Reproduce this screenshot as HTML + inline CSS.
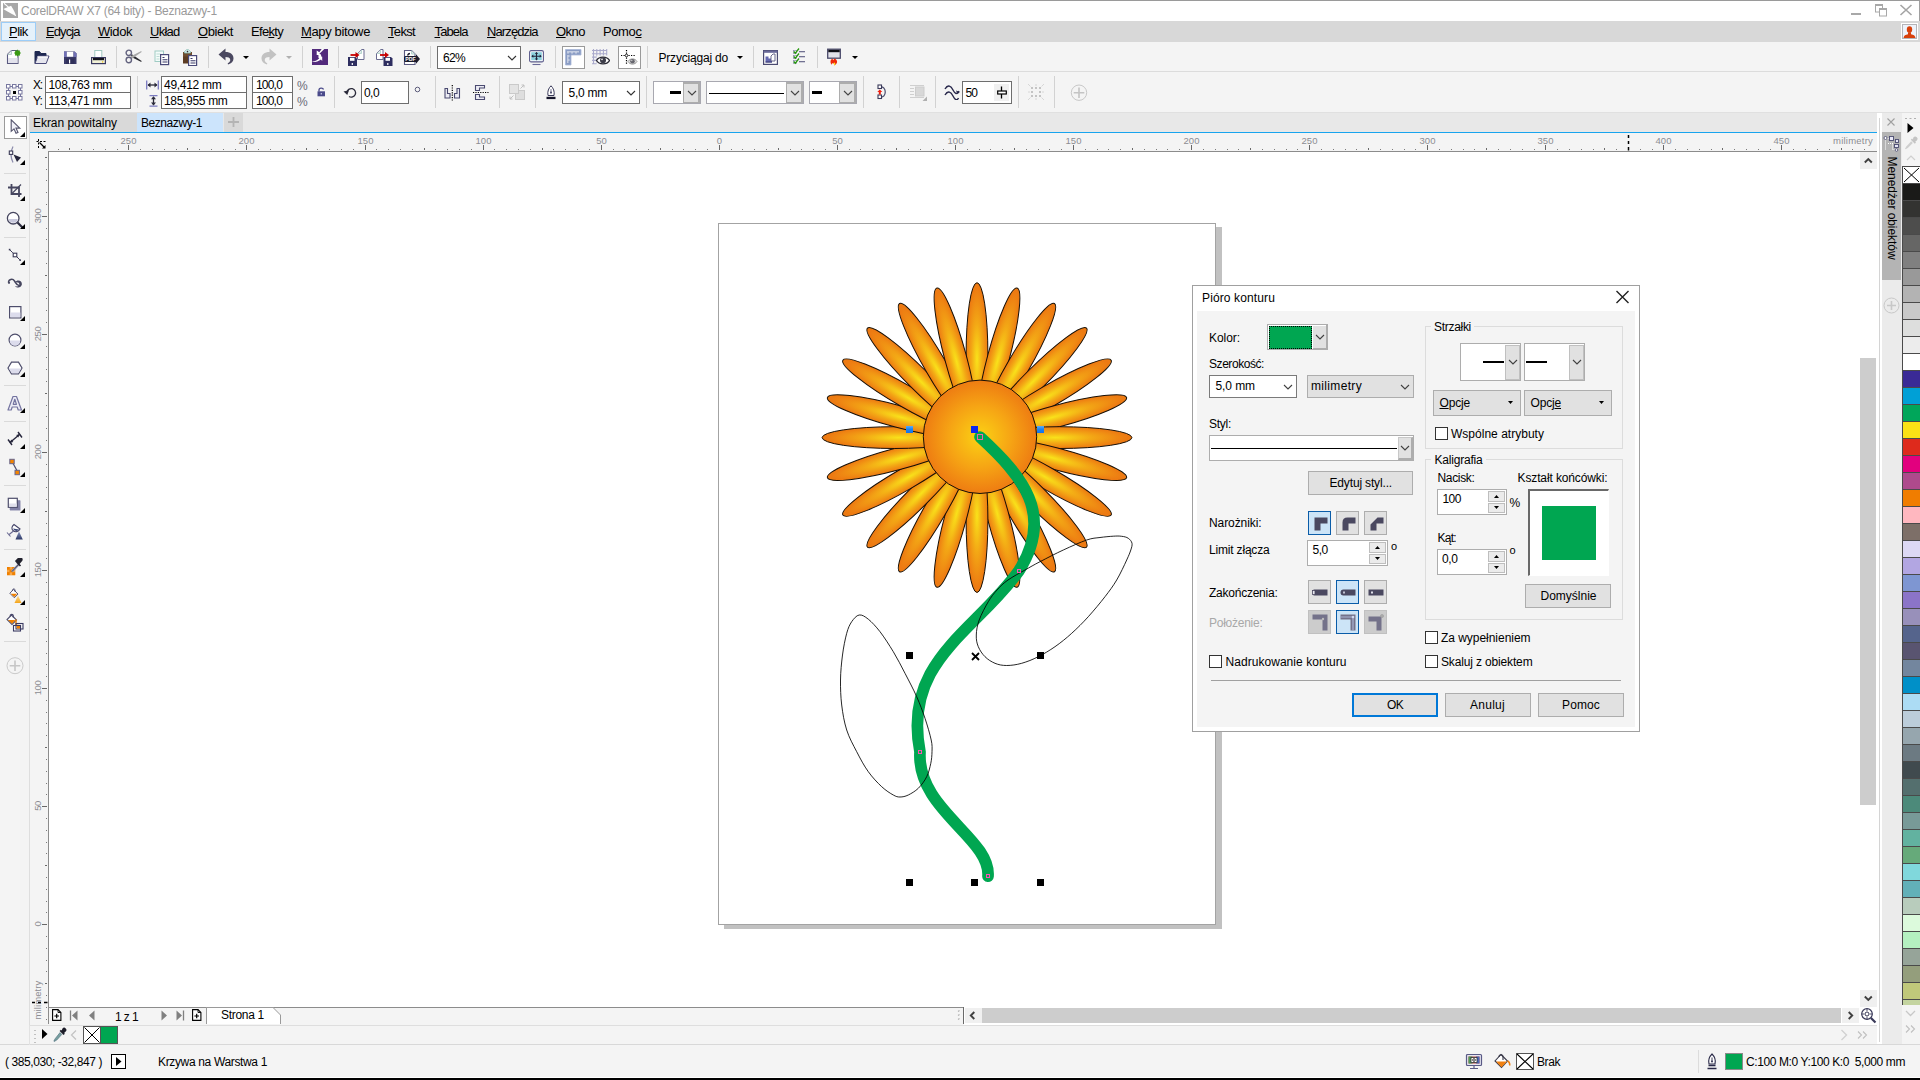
<!DOCTYPE html>
<html><head><meta charset="utf-8"><title>CorelDRAW X7</title><style>
html,body{margin:0;padding:0;}
body{width:1920px;height:1080px;overflow:hidden;position:relative;background:#fff;font-family:"Liberation Sans",sans-serif;}
.a{position:absolute;display:block;}
.t{position:absolute;white-space:pre;font-family:"Liberation Sans",sans-serif;}
u{text-decoration:underline;text-underline-offset:1px;}
</style></head><body>
<!-- sec_base -->
<div class="a" style="left:0px;top:0px;width:1920px;height:21px;background:#fff;"></div>
<div class="a" style="left:0px;top:0px;width:1920px;height:1px;background:#9a9a9a;"></div>
<div class="a" style="left:0px;top:21px;width:1920px;height:21px;background:#d8d8d8;"></div>
<div class="a" style="left:0px;top:42px;width:1920px;height:71px;background:#f4f4f4;"></div>
<div class="a" style="left:0px;top:71px;width:1920px;height:1px;background:#dcdcdc;"></div>
<div class="a" style="left:0px;top:112px;width:1920px;height:1px;background:#e0e0e0;"></div>
<div class="a" style="left:0px;top:113px;width:30px;height:934px;background:#f4f4f4;"></div>
<div class="a" style="left:29px;top:113px;width:1px;height:912px;background:#dedede;"></div>
<div class="a" style="left:30px;top:113px;width:1847px;height:19px;background:#e8e8e8;"></div>
<div class="a" style="left:30px;top:132px;width:1847px;height:1px;background:#18a4ee;"></div>
<div class="a" style="left:30px;top:133px;width:1847px;height:19px;background:#f4f4f4;"></div>
<div class="a" style="left:30px;top:133px;width:19px;height:892px;background:#f4f4f4;"></div>
<div class="a" style="left:49px;top:152px;width:1809px;height:854px;background:#fff;"></div>
<div class="a" style="left:48px;top:151px;width:1829px;height:1px;background:#8c8c8c;"></div>
<div class="a" style="left:48px;top:151px;width:1px;height:855px;background:#8c8c8c;"></div>
<!-- sec_canvas -->
<svg class="a" style="left:30px;top:133px;" width="1847" height="18" viewBox="0 0 1847 18"><rect x="28" y="16" width="1" height="1" fill="#7a7a7a"/><rect x="39" y="15" width="1" height="2" fill="#6a6a6a"/><rect x="51" y="16" width="1" height="1" fill="#7a7a7a"/><rect x="63" y="16" width="1" height="1" fill="#7a7a7a"/><rect x="75" y="16" width="1" height="1" fill="#7a7a7a"/><rect x="87" y="16" width="1" height="1" fill="#7a7a7a"/><rect x="98" y="12" width="1" height="5" fill="#686868"/><rect x="110" y="16" width="1" height="1" fill="#7a7a7a"/><rect x="122" y="16" width="1" height="1" fill="#7a7a7a"/><rect x="134" y="16" width="1" height="1" fill="#7a7a7a"/><rect x="146" y="16" width="1" height="1" fill="#7a7a7a"/><rect x="157" y="15" width="1" height="2" fill="#6a6a6a"/><rect x="169" y="16" width="1" height="1" fill="#7a7a7a"/><rect x="181" y="16" width="1" height="1" fill="#7a7a7a"/><rect x="193" y="16" width="1" height="1" fill="#7a7a7a"/><rect x="205" y="16" width="1" height="1" fill="#7a7a7a"/><rect x="216" y="12" width="1" height="5" fill="#686868"/><rect x="228" y="16" width="1" height="1" fill="#7a7a7a"/><rect x="240" y="16" width="1" height="1" fill="#7a7a7a"/><rect x="252" y="16" width="1" height="1" fill="#7a7a7a"/><rect x="264" y="16" width="1" height="1" fill="#7a7a7a"/><rect x="276" y="15" width="1" height="2" fill="#6a6a6a"/><rect x="287" y="16" width="1" height="1" fill="#7a7a7a"/><rect x="299" y="16" width="1" height="1" fill="#7a7a7a"/><rect x="311" y="16" width="1" height="1" fill="#7a7a7a"/><rect x="323" y="16" width="1" height="1" fill="#7a7a7a"/><rect x="335" y="12" width="1" height="5" fill="#686868"/><rect x="346" y="16" width="1" height="1" fill="#7a7a7a"/><rect x="358" y="16" width="1" height="1" fill="#7a7a7a"/><rect x="370" y="16" width="1" height="1" fill="#7a7a7a"/><rect x="382" y="16" width="1" height="1" fill="#7a7a7a"/><rect x="394" y="15" width="1" height="2" fill="#6a6a6a"/><rect x="405" y="16" width="1" height="1" fill="#7a7a7a"/><rect x="417" y="16" width="1" height="1" fill="#7a7a7a"/><rect x="429" y="16" width="1" height="1" fill="#7a7a7a"/><rect x="441" y="16" width="1" height="1" fill="#7a7a7a"/><rect x="453" y="12" width="1" height="5" fill="#686868"/><rect x="464" y="16" width="1" height="1" fill="#7a7a7a"/><rect x="476" y="16" width="1" height="1" fill="#7a7a7a"/><rect x="488" y="16" width="1" height="1" fill="#7a7a7a"/><rect x="500" y="16" width="1" height="1" fill="#7a7a7a"/><rect x="512" y="15" width="1" height="2" fill="#6a6a6a"/><rect x="523" y="16" width="1" height="1" fill="#7a7a7a"/><rect x="535" y="16" width="1" height="1" fill="#7a7a7a"/><rect x="547" y="16" width="1" height="1" fill="#7a7a7a"/><rect x="559" y="16" width="1" height="1" fill="#7a7a7a"/><rect x="571" y="12" width="1" height="5" fill="#686868"/><rect x="583" y="16" width="1" height="1" fill="#7a7a7a"/><rect x="594" y="16" width="1" height="1" fill="#7a7a7a"/><rect x="606" y="16" width="1" height="1" fill="#7a7a7a"/><rect x="618" y="16" width="1" height="1" fill="#7a7a7a"/><rect x="630" y="15" width="1" height="2" fill="#6a6a6a"/><rect x="642" y="16" width="1" height="1" fill="#7a7a7a"/><rect x="653" y="16" width="1" height="1" fill="#7a7a7a"/><rect x="665" y="16" width="1" height="1" fill="#7a7a7a"/><rect x="677" y="16" width="1" height="1" fill="#7a7a7a"/><rect x="689" y="12" width="1" height="5" fill="#686868"/><rect x="701" y="16" width="1" height="1" fill="#7a7a7a"/><rect x="712" y="16" width="1" height="1" fill="#7a7a7a"/><rect x="724" y="16" width="1" height="1" fill="#7a7a7a"/><rect x="736" y="16" width="1" height="1" fill="#7a7a7a"/><rect x="748" y="15" width="1" height="2" fill="#6a6a6a"/><rect x="760" y="16" width="1" height="1" fill="#7a7a7a"/><rect x="771" y="16" width="1" height="1" fill="#7a7a7a"/><rect x="783" y="16" width="1" height="1" fill="#7a7a7a"/><rect x="795" y="16" width="1" height="1" fill="#7a7a7a"/><rect x="807" y="12" width="1" height="5" fill="#686868"/><rect x="819" y="16" width="1" height="1" fill="#7a7a7a"/><rect x="830" y="16" width="1" height="1" fill="#7a7a7a"/><rect x="842" y="16" width="1" height="1" fill="#7a7a7a"/><rect x="854" y="16" width="1" height="1" fill="#7a7a7a"/><rect x="866" y="15" width="1" height="2" fill="#6a6a6a"/><rect x="878" y="16" width="1" height="1" fill="#7a7a7a"/><rect x="890" y="16" width="1" height="1" fill="#7a7a7a"/><rect x="901" y="16" width="1" height="1" fill="#7a7a7a"/><rect x="913" y="16" width="1" height="1" fill="#7a7a7a"/><rect x="925" y="12" width="1" height="5" fill="#686868"/><rect x="937" y="16" width="1" height="1" fill="#7a7a7a"/><rect x="949" y="16" width="1" height="1" fill="#7a7a7a"/><rect x="960" y="16" width="1" height="1" fill="#7a7a7a"/><rect x="972" y="16" width="1" height="1" fill="#7a7a7a"/><rect x="984" y="15" width="1" height="2" fill="#6a6a6a"/><rect x="996" y="16" width="1" height="1" fill="#7a7a7a"/><rect x="1008" y="16" width="1" height="1" fill="#7a7a7a"/><rect x="1019" y="16" width="1" height="1" fill="#7a7a7a"/><rect x="1031" y="16" width="1" height="1" fill="#7a7a7a"/><rect x="1043" y="12" width="1" height="5" fill="#686868"/><rect x="1055" y="16" width="1" height="1" fill="#7a7a7a"/><rect x="1067" y="16" width="1" height="1" fill="#7a7a7a"/><rect x="1078" y="16" width="1" height="1" fill="#7a7a7a"/><rect x="1090" y="16" width="1" height="1" fill="#7a7a7a"/><rect x="1102" y="15" width="1" height="2" fill="#6a6a6a"/><rect x="1114" y="16" width="1" height="1" fill="#7a7a7a"/><rect x="1126" y="16" width="1" height="1" fill="#7a7a7a"/><rect x="1137" y="16" width="1" height="1" fill="#7a7a7a"/><rect x="1149" y="16" width="1" height="1" fill="#7a7a7a"/><rect x="1161" y="12" width="1" height="5" fill="#686868"/><rect x="1173" y="16" width="1" height="1" fill="#7a7a7a"/><rect x="1185" y="16" width="1" height="1" fill="#7a7a7a"/><rect x="1197" y="16" width="1" height="1" fill="#7a7a7a"/><rect x="1208" y="16" width="1" height="1" fill="#7a7a7a"/><rect x="1220" y="15" width="1" height="2" fill="#6a6a6a"/><rect x="1232" y="16" width="1" height="1" fill="#7a7a7a"/><rect x="1244" y="16" width="1" height="1" fill="#7a7a7a"/><rect x="1256" y="16" width="1" height="1" fill="#7a7a7a"/><rect x="1267" y="16" width="1" height="1" fill="#7a7a7a"/><rect x="1279" y="12" width="1" height="5" fill="#686868"/><rect x="1291" y="16" width="1" height="1" fill="#7a7a7a"/><rect x="1303" y="16" width="1" height="1" fill="#7a7a7a"/><rect x="1315" y="16" width="1" height="1" fill="#7a7a7a"/><rect x="1326" y="16" width="1" height="1" fill="#7a7a7a"/><rect x="1338" y="15" width="1" height="2" fill="#6a6a6a"/><rect x="1350" y="16" width="1" height="1" fill="#7a7a7a"/><rect x="1362" y="16" width="1" height="1" fill="#7a7a7a"/><rect x="1374" y="16" width="1" height="1" fill="#7a7a7a"/><rect x="1385" y="16" width="1" height="1" fill="#7a7a7a"/><rect x="1397" y="12" width="1" height="5" fill="#686868"/><rect x="1409" y="16" width="1" height="1" fill="#7a7a7a"/><rect x="1421" y="16" width="1" height="1" fill="#7a7a7a"/><rect x="1433" y="16" width="1" height="1" fill="#7a7a7a"/><rect x="1444" y="16" width="1" height="1" fill="#7a7a7a"/><rect x="1456" y="15" width="1" height="2" fill="#6a6a6a"/><rect x="1468" y="16" width="1" height="1" fill="#7a7a7a"/><rect x="1480" y="16" width="1" height="1" fill="#7a7a7a"/><rect x="1492" y="16" width="1" height="1" fill="#7a7a7a"/><rect x="1504" y="16" width="1" height="1" fill="#7a7a7a"/><rect x="1515" y="12" width="1" height="5" fill="#686868"/><rect x="1527" y="16" width="1" height="1" fill="#7a7a7a"/><rect x="1539" y="16" width="1" height="1" fill="#7a7a7a"/><rect x="1551" y="16" width="1" height="1" fill="#7a7a7a"/><rect x="1563" y="16" width="1" height="1" fill="#7a7a7a"/><rect x="1574" y="15" width="1" height="2" fill="#6a6a6a"/><rect x="1586" y="16" width="1" height="1" fill="#7a7a7a"/><rect x="1598" y="16" width="1" height="1" fill="#7a7a7a"/><rect x="1610" y="16" width="1" height="1" fill="#7a7a7a"/><rect x="1622" y="16" width="1" height="1" fill="#7a7a7a"/><rect x="1633" y="12" width="1" height="5" fill="#686868"/><rect x="1645" y="16" width="1" height="1" fill="#7a7a7a"/><rect x="1657" y="16" width="1" height="1" fill="#7a7a7a"/><rect x="1669" y="16" width="1" height="1" fill="#7a7a7a"/><rect x="1681" y="16" width="1" height="1" fill="#7a7a7a"/><rect x="1692" y="15" width="1" height="2" fill="#6a6a6a"/><rect x="1704" y="16" width="1" height="1" fill="#7a7a7a"/><rect x="1716" y="16" width="1" height="1" fill="#7a7a7a"/><rect x="1728" y="16" width="1" height="1" fill="#7a7a7a"/><rect x="1740" y="16" width="1" height="1" fill="#7a7a7a"/><rect x="1751" y="12" width="1" height="5" fill="#686868"/><rect x="1763" y="16" width="1" height="1" fill="#7a7a7a"/><rect x="1775" y="16" width="1" height="1" fill="#7a7a7a"/><rect x="1787" y="16" width="1" height="1" fill="#7a7a7a"/><rect x="1799" y="16" width="1" height="1" fill="#7a7a7a"/><rect x="1811" y="15" width="1" height="2" fill="#6a6a6a"/><rect x="1822" y="16" width="1" height="1" fill="#7a7a7a"/><rect x="1834" y="16" width="1" height="1" fill="#7a7a7a"/></svg>
<div class="t" style="left:128.5px;top:135.96px;font-size:9.5px;line-height:9.5px;color:#8c8c92;transform:translateX(-50%)">250</div>
<div class="t" style="left:246.5px;top:135.96px;font-size:9.5px;line-height:9.5px;color:#8c8c92;transform:translateX(-50%)">200</div>
<div class="t" style="left:365.5px;top:135.96px;font-size:9.5px;line-height:9.5px;color:#8c8c92;transform:translateX(-50%)">150</div>
<div class="t" style="left:483.5px;top:135.96px;font-size:9.5px;line-height:9.5px;color:#8c8c92;transform:translateX(-50%)">100</div>
<div class="t" style="left:601.5px;top:135.96px;font-size:9.5px;line-height:9.5px;color:#8c8c92;transform:translateX(-50%)">50</div>
<div class="t" style="left:719.5px;top:135.96px;font-size:9.5px;line-height:9.5px;color:#8c8c92;transform:translateX(-50%)">0</div>
<div class="t" style="left:837.5px;top:135.96px;font-size:9.5px;line-height:9.5px;color:#8c8c92;transform:translateX(-50%)">50</div>
<div class="t" style="left:955.5px;top:135.96px;font-size:9.5px;line-height:9.5px;color:#8c8c92;transform:translateX(-50%)">100</div>
<div class="t" style="left:1073.5px;top:135.96px;font-size:9.5px;line-height:9.5px;color:#8c8c92;transform:translateX(-50%)">150</div>
<div class="t" style="left:1191.5px;top:135.96px;font-size:9.5px;line-height:9.5px;color:#8c8c92;transform:translateX(-50%)">200</div>
<div class="t" style="left:1309.5px;top:135.96px;font-size:9.5px;line-height:9.5px;color:#8c8c92;transform:translateX(-50%)">250</div>
<div class="t" style="left:1427.5px;top:135.96px;font-size:9.5px;line-height:9.5px;color:#8c8c92;transform:translateX(-50%)">300</div>
<div class="t" style="left:1545.5px;top:135.96px;font-size:9.5px;line-height:9.5px;color:#8c8c92;transform:translateX(-50%)">350</div>
<div class="t" style="left:1663.5px;top:135.96px;font-size:9.5px;line-height:9.5px;color:#8c8c92;transform:translateX(-50%)">400</div>
<div class="t" style="left:1781.5px;top:135.96px;font-size:9.5px;line-height:9.5px;color:#8c8c92;transform:translateX(-50%)">450</div>
<div class="t" style="left:1833px;top:135.96px;font-size:9.5px;line-height:9.5px;color:#8c8c92;letter-spacing:0.222px;">milimetry</div>
<svg class="a" style="left:1627px;top:134px;" width="3" height="17" viewBox="0 0 3 17"><path d="M1.5 1v3M1.5 7v3M1.5 13v3.500" stroke="#000" stroke-width="1.500"/></svg>
<svg class="a" style="left:30px;top:133px;" width="18" height="892" viewBox="0 0 18 892"><rect x="16" y="886" width="1" height="1" fill="#7a7a7a"/><rect x="16" y="874" width="1" height="1" fill="#7a7a7a"/><rect x="16" y="862" width="1" height="1" fill="#7a7a7a"/><rect x="15" y="850" width="2" height="1" fill="#6a6a6a"/><rect x="16" y="838" width="1" height="1" fill="#7a7a7a"/><rect x="16" y="827" width="1" height="1" fill="#7a7a7a"/><rect x="16" y="815" width="1" height="1" fill="#7a7a7a"/><rect x="16" y="803" width="1" height="1" fill="#7a7a7a"/><rect x="12" y="791" width="5" height="1" fill="#686868"/><rect x="16" y="779" width="1" height="1" fill="#7a7a7a"/><rect x="16" y="768" width="1" height="1" fill="#7a7a7a"/><rect x="16" y="756" width="1" height="1" fill="#7a7a7a"/><rect x="16" y="744" width="1" height="1" fill="#7a7a7a"/><rect x="15" y="732" width="2" height="1" fill="#6a6a6a"/><rect x="16" y="720" width="1" height="1" fill="#7a7a7a"/><rect x="16" y="709" width="1" height="1" fill="#7a7a7a"/><rect x="16" y="697" width="1" height="1" fill="#7a7a7a"/><rect x="16" y="685" width="1" height="1" fill="#7a7a7a"/><rect x="12" y="673" width="5" height="1" fill="#686868"/><rect x="16" y="661" width="1" height="1" fill="#7a7a7a"/><rect x="16" y="650" width="1" height="1" fill="#7a7a7a"/><rect x="16" y="638" width="1" height="1" fill="#7a7a7a"/><rect x="16" y="626" width="1" height="1" fill="#7a7a7a"/><rect x="15" y="614" width="2" height="1" fill="#6a6a6a"/><rect x="16" y="602" width="1" height="1" fill="#7a7a7a"/><rect x="16" y="590" width="1" height="1" fill="#7a7a7a"/><rect x="16" y="579" width="1" height="1" fill="#7a7a7a"/><rect x="16" y="567" width="1" height="1" fill="#7a7a7a"/><rect x="12" y="555" width="5" height="1" fill="#686868"/><rect x="16" y="543" width="1" height="1" fill="#7a7a7a"/><rect x="16" y="531" width="1" height="1" fill="#7a7a7a"/><rect x="16" y="520" width="1" height="1" fill="#7a7a7a"/><rect x="16" y="508" width="1" height="1" fill="#7a7a7a"/><rect x="15" y="496" width="2" height="1" fill="#6a6a6a"/><rect x="16" y="484" width="1" height="1" fill="#7a7a7a"/><rect x="16" y="472" width="1" height="1" fill="#7a7a7a"/><rect x="16" y="461" width="1" height="1" fill="#7a7a7a"/><rect x="16" y="449" width="1" height="1" fill="#7a7a7a"/><rect x="12" y="437" width="5" height="1" fill="#686868"/><rect x="16" y="425" width="1" height="1" fill="#7a7a7a"/><rect x="16" y="413" width="1" height="1" fill="#7a7a7a"/><rect x="16" y="402" width="1" height="1" fill="#7a7a7a"/><rect x="16" y="390" width="1" height="1" fill="#7a7a7a"/><rect x="15" y="378" width="2" height="1" fill="#6a6a6a"/><rect x="16" y="366" width="1" height="1" fill="#7a7a7a"/><rect x="16" y="354" width="1" height="1" fill="#7a7a7a"/><rect x="16" y="343" width="1" height="1" fill="#7a7a7a"/><rect x="16" y="331" width="1" height="1" fill="#7a7a7a"/><rect x="12" y="319" width="5" height="1" fill="#686868"/><rect x="16" y="307" width="1" height="1" fill="#7a7a7a"/><rect x="16" y="295" width="1" height="1" fill="#7a7a7a"/><rect x="16" y="283" width="1" height="1" fill="#7a7a7a"/><rect x="16" y="272" width="1" height="1" fill="#7a7a7a"/><rect x="15" y="260" width="2" height="1" fill="#6a6a6a"/><rect x="16" y="248" width="1" height="1" fill="#7a7a7a"/><rect x="16" y="236" width="1" height="1" fill="#7a7a7a"/><rect x="16" y="224" width="1" height="1" fill="#7a7a7a"/><rect x="16" y="213" width="1" height="1" fill="#7a7a7a"/><rect x="12" y="201" width="5" height="1" fill="#686868"/><rect x="16" y="189" width="1" height="1" fill="#7a7a7a"/><rect x="16" y="177" width="1" height="1" fill="#7a7a7a"/><rect x="16" y="165" width="1" height="1" fill="#7a7a7a"/><rect x="16" y="154" width="1" height="1" fill="#7a7a7a"/><rect x="15" y="142" width="2" height="1" fill="#6a6a6a"/><rect x="16" y="130" width="1" height="1" fill="#7a7a7a"/><rect x="16" y="118" width="1" height="1" fill="#7a7a7a"/><rect x="16" y="106" width="1" height="1" fill="#7a7a7a"/><rect x="16" y="95" width="1" height="1" fill="#7a7a7a"/><rect x="12" y="83" width="5" height="1" fill="#686868"/><rect x="16" y="71" width="1" height="1" fill="#7a7a7a"/><rect x="16" y="59" width="1" height="1" fill="#7a7a7a"/><rect x="16" y="47" width="1" height="1" fill="#7a7a7a"/><rect x="16" y="36" width="1" height="1" fill="#7a7a7a"/><rect x="15" y="24" width="2" height="1" fill="#6a6a6a"/></svg>
<div class="t" style="left:37.5px;top:923.5px;font-size:9.5px;line-height:9.5px;color:#8c8c92;transform:translate(-50%,-50%) rotate(-90deg);letter-spacing:-0.5px">0</div>
<div class="t" style="left:37.5px;top:805.5px;font-size:9.5px;line-height:9.5px;color:#8c8c92;transform:translate(-50%,-50%) rotate(-90deg);letter-spacing:-0.5px">50</div>
<div class="t" style="left:37.5px;top:687.5px;font-size:9.5px;line-height:9.5px;color:#8c8c92;transform:translate(-50%,-50%) rotate(-90deg);letter-spacing:-0.5px">100</div>
<div class="t" style="left:37.5px;top:569.5px;font-size:9.5px;line-height:9.5px;color:#8c8c92;transform:translate(-50%,-50%) rotate(-90deg);letter-spacing:-0.5px">150</div>
<div class="t" style="left:37.5px;top:451.5px;font-size:9.5px;line-height:9.5px;color:#8c8c92;transform:translate(-50%,-50%) rotate(-90deg);letter-spacing:-0.5px">200</div>
<div class="t" style="left:37.5px;top:333.5px;font-size:9.5px;line-height:9.5px;color:#8c8c92;transform:translate(-50%,-50%) rotate(-90deg);letter-spacing:-0.5px">250</div>
<div class="t" style="left:37.5px;top:215.5px;font-size:9.5px;line-height:9.5px;color:#8c8c92;transform:translate(-50%,-50%) rotate(-90deg);letter-spacing:-0.5px">300</div>
<div class="t" style="left:38px;top:1000px;font-size:9.5px;line-height:9.5px;color:#8c8c92;transform:translate(-50%,-50%) rotate(-90deg);letter-spacing:0.1px">milimetry</div>
<svg class="a" style="left:31px;top:1001px;" width="17" height="3" viewBox="0 0 17 3"><path d="M1 1.500h3M7 1.500h3M13 1.500h3.500" stroke="#000" stroke-width="1.500"/></svg>
<svg class="a" style="left:35px;top:138px;" width="12" height="12" viewBox="0 0 12 12"><path d="M1.5 3.5h9M3.5 1v10" stroke="#000" stroke-width="1" stroke-dasharray="2,1.5" fill="none"/><path d="M4.5 4.5l5 5" stroke="#000" stroke-width="1.2"/><path d="M10.5 10.5v-3.5l-3.5 3.5z" fill="#000"/></svg>
<div class="a" style="left:1216px;top:227px;width:6px;height:702px;background:#c1c1c1;"></div>
<div class="a" style="left:724px;top:925px;width:498px;height:4px;background:#c1c1c1;"></div>
<div class="a" style="left:718px;top:223px;width:498px;height:702px;background:#fff;border:1px solid #a3a3a3;box-sizing:border-box;"></div>
<svg class="a" style="left:0;top:0" width="1920" height="1080" viewBox="0 0 1920 1080"><defs>
<radialGradient id="pg" cx="0.5" cy="0.53" r="0.5"><stop offset="0" stop-color="#f9e21a"/><stop offset="0.5" stop-color="#f3a815"/><stop offset="1" stop-color="#ed7a12"/></radialGradient><linearGradient id="hb" x1="0" y1="0" x2="0" y2="1"><stop offset="0" stop-color="#58acf8"/><stop offset="0.45" stop-color="#1c84f0"/><stop offset="1" stop-color="#1472ec"/></linearGradient>
<radialGradient id="cg" cx="0.5" cy="0.5" r="0.5"><stop offset="0" stop-color="#fbd214"/><stop offset="0.55" stop-color="#f6a414"/><stop offset="1" stop-color="#ee7c12"/></radialGradient>
</defs>
<g transform="translate(977.0,437.6)"><ellipse cx="0" cy="-82.6" rx="10.9" ry="72.3" transform="rotate(0)" fill="url(#pg)" stroke="#171006" stroke-width="1"/><ellipse cx="0" cy="-82.6" rx="10.9" ry="72.3" transform="rotate(15)" fill="url(#pg)" stroke="#171006" stroke-width="1"/><ellipse cx="0" cy="-82.6" rx="10.9" ry="72.3" transform="rotate(30)" fill="url(#pg)" stroke="#171006" stroke-width="1"/><ellipse cx="0" cy="-82.6" rx="10.9" ry="72.3" transform="rotate(45)" fill="url(#pg)" stroke="#171006" stroke-width="1"/><ellipse cx="0" cy="-82.6" rx="10.9" ry="72.3" transform="rotate(60)" fill="url(#pg)" stroke="#171006" stroke-width="1"/><ellipse cx="0" cy="-82.6" rx="10.9" ry="72.3" transform="rotate(75)" fill="url(#pg)" stroke="#171006" stroke-width="1"/><ellipse cx="0" cy="-82.6" rx="10.9" ry="72.3" transform="rotate(90)" fill="url(#pg)" stroke="#171006" stroke-width="1"/><ellipse cx="0" cy="-82.6" rx="10.9" ry="72.3" transform="rotate(105)" fill="url(#pg)" stroke="#171006" stroke-width="1"/><ellipse cx="0" cy="-82.6" rx="10.9" ry="72.3" transform="rotate(120)" fill="url(#pg)" stroke="#171006" stroke-width="1"/><ellipse cx="0" cy="-82.6" rx="10.9" ry="72.3" transform="rotate(135)" fill="url(#pg)" stroke="#171006" stroke-width="1"/><ellipse cx="0" cy="-82.6" rx="10.9" ry="72.3" transform="rotate(150)" fill="url(#pg)" stroke="#171006" stroke-width="1"/><ellipse cx="0" cy="-82.6" rx="10.9" ry="72.3" transform="rotate(165)" fill="url(#pg)" stroke="#171006" stroke-width="1"/><ellipse cx="0" cy="-82.6" rx="10.9" ry="72.3" transform="rotate(180)" fill="url(#pg)" stroke="#171006" stroke-width="1"/><ellipse cx="0" cy="-82.6" rx="10.9" ry="72.3" transform="rotate(195)" fill="url(#pg)" stroke="#171006" stroke-width="1"/><ellipse cx="0" cy="-82.6" rx="10.9" ry="72.3" transform="rotate(210)" fill="url(#pg)" stroke="#171006" stroke-width="1"/><ellipse cx="0" cy="-82.6" rx="10.9" ry="72.3" transform="rotate(225)" fill="url(#pg)" stroke="#171006" stroke-width="1"/><ellipse cx="0" cy="-82.6" rx="10.9" ry="72.3" transform="rotate(240)" fill="url(#pg)" stroke="#171006" stroke-width="1"/><ellipse cx="0" cy="-82.6" rx="10.9" ry="72.3" transform="rotate(255)" fill="url(#pg)" stroke="#171006" stroke-width="1"/><ellipse cx="0" cy="-82.6" rx="10.9" ry="72.3" transform="rotate(270)" fill="url(#pg)" stroke="#171006" stroke-width="1"/><ellipse cx="0" cy="-82.6" rx="10.9" ry="72.3" transform="rotate(285)" fill="url(#pg)" stroke="#171006" stroke-width="1"/><ellipse cx="0" cy="-82.6" rx="10.9" ry="72.3" transform="rotate(300)" fill="url(#pg)" stroke="#171006" stroke-width="1"/><ellipse cx="0" cy="-82.6" rx="10.9" ry="72.3" transform="rotate(315)" fill="url(#pg)" stroke="#171006" stroke-width="1"/><ellipse cx="0" cy="-82.6" rx="10.9" ry="72.3" transform="rotate(330)" fill="url(#pg)" stroke="#171006" stroke-width="1"/><ellipse cx="0" cy="-82.6" rx="10.9" ry="72.3" transform="rotate(345)" fill="url(#pg)" stroke="#171006" stroke-width="1"/></g>
<circle cx="980" cy="436.8" r="56.7" fill="url(#cg)" stroke="#171006" stroke-width="1"/>
<path d="M980,437 C1022.5,476 1054.7,514.3 1018.8,571 C974.8,632.2 902.3,661.3 920,752 C916.6,809.7 990.9,837.9 988,876.2" fill="none" stroke="#00a651" stroke-width="11.7" stroke-linecap="round" stroke-linejoin="round"/>
<path d="M1132.0,543.3 C1131.6,541.3 1130.0,539.5 1128.3,538.3 C1126.6,537.1 1124.2,536.6 1121.7,536.3 C1119.2,535.9 1116.9,536.0 1113.3,536.2 C1109.7,536.4 1104.4,536.9 1100.0,537.5 C1095.6,538.1 1092.8,537.9 1086.7,540.0 C1080.6,542.1 1071.1,546.4 1063.3,550.0 C1055.5,553.6 1046.4,558.4 1040.0,561.7 C1033.6,565.0 1030.3,567.0 1025.0,570.0 C1019.7,573.0 1012.7,576.7 1008.0,580.0 C1003.3,583.3 1000.3,586.4 997.0,590.0 C993.7,593.6 991.3,596.7 988.3,601.7 C985.3,606.7 981.2,614.5 979.2,620.0 C977.2,625.5 976.4,630.5 976.3,635.0 C976.1,639.5 976.8,643.1 978.3,646.7 C979.8,650.3 982.2,653.9 985.0,656.7 C987.8,659.5 991.4,661.8 995.0,663.3 C998.6,664.8 1002.2,665.5 1006.7,665.5 C1011.2,665.5 1016.4,664.8 1021.7,663.3 C1027.0,661.8 1032.8,659.5 1038.3,656.7 C1043.8,653.9 1049.4,650.6 1055.0,646.7 C1060.6,642.8 1066.2,638.3 1071.7,633.3 C1077.2,628.3 1082.8,622.8 1088.3,616.7 C1093.8,610.6 1100.3,602.8 1105.0,596.7 C1109.7,590.6 1113.1,586.1 1116.7,580.0 C1120.3,573.9 1124.4,565.0 1126.7,560.0 C1129.0,555.0 1129.9,552.8 1130.8,550.0 C1131.7,547.2 1132.4,545.2 1132.0,543.3Z" fill="none" stroke="#000" stroke-width="0.85"/><path d="M859.2,615.0 C856.4,615.4 853.8,618.7 851.7,621.7 C849.6,624.8 848.2,627.8 846.7,633.3 C845.2,638.8 843.5,647.2 842.5,655.0 C841.5,662.8 840.6,671.7 840.5,680.0 C840.4,688.3 840.7,696.7 841.7,705.0 C842.7,713.3 844.2,722.2 846.7,730.0 C849.2,737.8 853.1,744.8 856.7,751.7 C860.3,758.7 864.1,765.9 868.3,771.7 C872.5,777.5 877.5,782.8 881.7,786.7 C885.9,790.6 890.2,793.3 893.3,795.0 C896.3,796.7 897.5,797.0 900.0,797.0 C902.5,797.0 905.2,796.5 908.3,795.0 C911.3,793.5 915.2,791.3 918.3,788.3 C921.4,785.2 924.6,780.9 926.7,776.7 C928.8,772.5 929.9,767.5 930.8,763.3 C931.7,759.1 931.9,755.6 932.0,751.7 C932.1,747.8 932.4,745.6 931.2,740.0 C930.0,734.4 927.4,725.5 925.0,718.3 C922.6,711.1 920.0,704.2 916.7,696.7 C913.4,689.2 908.9,680.8 905.0,673.3 C901.1,665.8 897.5,658.6 893.3,651.7 C889.1,644.8 884.2,637.1 880.0,631.7 C875.8,626.3 871.8,622.0 868.3,619.2 C864.8,616.4 862.0,614.6 859.2,615.0Z" fill="none" stroke="#000" stroke-width="0.85"/><rect x="977.5" y="434.5" width="5" height="5" fill="none" stroke="#ee5fae" stroke-width="1"/><rect x="1017.5" y="569.5" width="3" height="3" fill="none" stroke="#ff50b4" stroke-width="1" shape-rendering="crispEdges"/><rect x="918.5" y="750.5" width="3" height="3" fill="none" stroke="#ff50b4" stroke-width="1" shape-rendering="crispEdges"/><rect x="986.5" y="874.5" width="3" height="3" fill="none" stroke="#ff50b4" stroke-width="1" shape-rendering="crispEdges"/><rect x="906" y="652" width="7" height="7" fill="#000"/><rect x="1037" y="652" width="7" height="7" fill="#000"/><rect x="906" y="879" width="7" height="7" fill="#000"/><rect x="971" y="879" width="7" height="7" fill="#000"/><rect x="1037" y="879" width="7" height="7" fill="#000"/><path d="M972,653l7,7M979,653l-7,7" stroke="#000" stroke-width="1.8"/><rect x="906" y="426" width="7" height="7" fill="url(#hb)"/><rect x="971" y="426" width="7" height="7" fill="#0c28f0"/><rect x="1037" y="426" width="7" height="7" fill="url(#hb)"/></svg>
<!-- sec_top -->
<svg class="a" style="left:3px;top:3px;" width="15" height="15" viewBox="0 0 15 15"><rect width="15" height="15" fill="#a8a8a8"/><path d="M0.300 6l7.800-3.200c2 3 4 7 5.200 10.500c-3-1.500-9-5-13-7.300z" fill="#fff"/><path d="M1 0.300l6.500 5.500" stroke="#fff" stroke-width="1.100"/></svg>
<div class="t" style="left:21px;top:4.84px;font-size:12px;line-height:12px;color:#9a9a9a;letter-spacing:-0.275px;">CorelDRAW X7 (64 bity) - Beznazwy-1</div>
<div class="a" style="left:1851px;top:13px;width:10px;height:2px;background:#a8a8a8;"></div>
<svg class="a" style="left:1875px;top:4px;" width="13" height="13" viewBox="0 0 13 13"><rect x="0.500" y="1" width="7" height="7" fill="#fff" stroke="#a8a8a8" stroke-width="1"/><rect x="0" y="0" width="8" height="2" fill="#a8a8a8"/><rect x="4.500" y="5" width="7" height="7" fill="#fff" stroke="#a8a8a8" stroke-width="1"/><rect x="4" y="4" width="8" height="2" fill="#a8a8a8"/></svg>
<svg class="a" style="left:1899px;top:4px;" width="14" height="12" viewBox="0 0 14 12"><path d="M1.500 1l11 10M12.500 1l-11 10" stroke="#a4a4a4" stroke-width="1.600"/></svg>
<div class="a" style="left:1919px;top:1px;width:1px;height:20px;background:#a0a0a0;"></div>
<div class="a" style="left:0px;top:1px;width:1px;height:20px;background:#b0b0b0;"></div>
<div class="a" style="left:1px;top:22px;width:35px;height:19px;background:#e5f1fb;border:1px solid #9ccdf8;box-sizing:border-box;"></div>
<div class="t" style="left:9px;top:25.00px;font-size:13px;line-height:13px;color:#000;letter-spacing:-0.551px;"><u>P</u>lik</div>
<div class="t" style="left:46px;top:25.00px;font-size:13px;line-height:13px;color:#000;letter-spacing:-0.922px;"><u>E</u>dycja</div>
<div class="t" style="left:98px;top:25.00px;font-size:13px;line-height:13px;color:#000;letter-spacing:-0.425px;"><u>W</u>idok</div>
<div class="t" style="left:150px;top:25.00px;font-size:13px;line-height:13px;color:#000;letter-spacing:-0.750px;"><u>U</u>kład</div>
<div class="t" style="left:198px;top:25.00px;font-size:13px;line-height:13px;color:#000;letter-spacing:-0.430px;"><u>O</u>biekt</div>
<div class="t" style="left:251px;top:25.00px;font-size:13px;line-height:13px;color:#000;letter-spacing:-0.688px;">Efe<u>k</u>ty</div>
<div class="t" style="left:301px;top:25.00px;font-size:13px;line-height:13px;color:#000;letter-spacing:-0.362px;"><u>M</u>apy bitowe</div>
<div class="t" style="left:388px;top:25.00px;font-size:13px;line-height:13px;color:#000;letter-spacing:-0.669px;"><u>T</u>ekst</div>
<div class="t" style="left:434.5px;top:25.00px;font-size:13px;line-height:13px;color:#000;letter-spacing:-0.885px;"><u>T</u>abela</div>
<div class="t" style="left:487px;top:25.00px;font-size:13px;line-height:13px;color:#000;letter-spacing:-0.892px;"><u>N</u>arzędzia</div>
<div class="t" style="left:556px;top:25.00px;font-size:13px;line-height:13px;color:#000;letter-spacing:-0.520px;"><u>O</u>kno</div>
<div class="t" style="left:603px;top:25.00px;font-size:13px;line-height:13px;color:#000;letter-spacing:-0.394px;">Pomo<u>c</u></div>
<svg class="a" style="left:1901px;top:23px;" width="17" height="17" viewBox="0 0 17 17"><rect width="17" height="17" fill="#fff"/><rect x="1.500" y="1.500" width="14" height="14" fill="#eef2fa" stroke="#b4b4b8"/><ellipse cx="8.500" cy="6.500" rx="2.700" ry="3.300" fill="#d8400c"/><path d="M2.500 15c0.300-2.500 2-3.200 4.500-3.700v-2h3v2c2.500 0.500 4.200 1.200 4.500 3.700z" fill="#d8400c"/></svg>
<div class="a" style="left:116px;top:46px;width:1px;height:22px;background:#d2d2d2;"></div>
<div class="a" style="left:208px;top:46px;width:1px;height:22px;background:#d2d2d2;"></div>
<div class="a" style="left:302px;top:46px;width:1px;height:22px;background:#d2d2d2;"></div>
<div class="a" style="left:338px;top:46px;width:1px;height:22px;background:#d2d2d2;"></div>
<div class="a" style="left:430px;top:46px;width:1px;height:22px;background:#d2d2d2;"></div>
<div class="a" style="left:555px;top:46px;width:1px;height:22px;background:#d2d2d2;"></div>
<div class="a" style="left:647px;top:46px;width:1px;height:22px;background:#d2d2d2;"></div>
<div class="a" style="left:753px;top:46px;width:1px;height:22px;background:#d2d2d2;"></div>
<div class="a" style="left:817px;top:46px;width:1px;height:22px;background:#d2d2d2;"></div>
<svg class="a" style="left:6px;top:49px;" width="17" height="16" viewBox="0 0 17 16"><path d="M1.500 5.500l4-4h6.500v13h-10.500z" fill="#fff" stroke="#5a5a80" stroke-width="1.100"/><path d="M1.500 5.500h4v-4" fill="#e4ece8" stroke="#a8c4c0" stroke-width="0.800"/><rect x="2" y="9" width="9.500" height="5" fill="#e2e2ec"/><circle cx="11.500" cy="4" r="2.600" fill="#3a9a14"/><path d="M11.500 0.700v6.600M8.200 4h6.600M9.200 1.700l4.600 4.600M13.800 1.700l-4.600 4.600" stroke="#3a9a14" stroke-width="1.100"/></svg>
<svg class="a" style="left:34px;top:50px;" width="16" height="15" viewBox="0 0 16 15"><path d="M1 13.500v-12h4.500l1.500 2h5v3" fill="#1e2850" stroke="#1e2850" stroke-width="1"/><path d="M1 13.500l2.800-7.500h11.200l-2.800 7.500z" fill="#e6e6ee" stroke="#4a4a78" stroke-width="1"/><path d="M3.300 7h10.700" stroke="#fff" stroke-width="1.200"/></svg>
<svg class="a" style="left:64px;top:51px;" width="13" height="13" viewBox="0 0 13 13"><path d="M0 0.500h10.500l2 2v10.500h-12.500z" fill="#3a3a68"/><path d="M0 0.500h2.800v5.500h-2.800zM9.500 0.500h1l2 2v3.500h-3z" fill="#7070b4"/><rect x="2.800" y="0.800" width="6.500" height="5" fill="#fff"/><rect x="2" y="7.500" width="8.500" height="5.500" fill="#30305a"/><rect x="5" y="8.500" width="1.200" height="4" fill="#fff"/></svg>
<svg class="a" style="left:91px;top:50px;" width="15" height="15" viewBox="0 0 15 15"><rect x="3.800" y="0.500" width="7" height="8" fill="#fff" stroke="#a0c8c0" stroke-width="1"/><rect x="0.600" y="7.600" width="13.800" height="6" fill="#f2f2d8" stroke="#3a3a60" stroke-width="1.200"/><rect x="2" y="8" width="11" height="2.200" fill="#14141e"/><rect x="11" y="11.300" width="1.200" height="1.200" fill="#f0c010"/></svg>
<svg class="a" style="left:125px;top:49px;" width="18" height="15" viewBox="0 0 18 15"><path d="M6.500 5l10.500 7.200-1.200 0.600-10-5z" fill="#2a2a30"/><path d="M6.500 10l10.500-7.200-1.200-0.600-10 5z" fill="#a8a8a8"/><circle cx="3.800" cy="3.800" r="2.700" fill="#f4f4f4" stroke="#62627e" stroke-width="1.400"/><circle cx="3.800" cy="11" r="2.700" fill="#f4f4f4" stroke="#62627e" stroke-width="1.400"/></svg>
<svg class="a" style="left:154px;top:50px;" width="16" height="16" viewBox="0 0 16 16"><rect x="1" y="1" width="8.500" height="10.500" fill="#f4fcfa" stroke="#a0ccc4" stroke-width="1"/><path d="M2.500 4h4M2.500 6.500h3M2.500 9h3" stroke="#b8d8d0" stroke-width="0.900"/><g transform="translate(6,4)"><rect x="0.600" y="0.600" width="8" height="10" fill="#fff" stroke="#4a4a78" stroke-width="1.200"/><path d="M2.500 3.500h2M2.500 5.800h5M2.500 8h5" stroke="#3a3a68" stroke-width="1.100"/></g></svg>
<svg class="a" style="left:182px;top:49px;" width="16" height="17" viewBox="0 0 16 17"><rect x="1" y="3" width="9" height="11.500" fill="#5c3c22"/><rect x="1" y="3" width="9" height="4.500" fill="#6e4c2e"/><path d="M2.500 4v-1.500l2-1.800h2l2 1.800v1.500z" fill="#d8ecea" stroke="#8cc0b8" stroke-width="0.800"/><circle cx="5.500" cy="2.600" r="0.800" fill="#333"/><g transform="translate(6,6)"><rect x="0.600" y="0.600" width="8" height="10" fill="#fff" stroke="#4a4a78" stroke-width="1.200"/><path d="M2.500 3.500h2M2.500 5.800h5M2.500 8h5" stroke="#3a3a68" stroke-width="1.100"/></g></svg>
<svg class="a" style="left:218px;top:48px;" width="16" height="17" viewBox="0 0 16 17"><path d="M0.500 6.500l7-6v3.500c5 0 8 2.500 8 6.500 0 3-2 5-5.500 6l-0.300-1.300c2-0.800 2.800-2.200 2.500-3.700-0.400-1.800-2-2.500-4.700-2.500v3.500z" fill="#4a4860"/></svg>
<svg class="a" style="left:242.5px;top:56px;" width="6" height="3" viewBox="0 0 6 3"><path d="M0 0h6l-3.0 3z" fill="#000"/></svg>
<svg class="a" style="left:261px;top:48px;" width="16" height="17" viewBox="0 0 16 17"><path d="M15.500 6.500l-7-6v3.500c-5 0-8 2.500-8 6.500 0 3 2 5 5.500 6l0.300-1.300c-2-0.800-2.800-2.200-2.500-3.700 0.400-1.800 2-2.500 4.700-2.500v3.500z" fill="#c2c2c2"/></svg>
<svg class="a" style="left:285.5px;top:56px;" width="6" height="3" viewBox="0 0 6 3"><path d="M0 0h6l-3.0 3z" fill="#b0b0b0"/></svg>
<svg class="a" style="left:312px;top:49px;" width="16" height="16" viewBox="0 0 16 16"><rect width="16" height="16" fill="#522a7c"/><path d="M12.300 0h-2.600l-2.400 3.200-2.600-1.700v4.500h4.300l-1.600-1.300z" fill="#fff"/><path d="M6.300 5.500l2.600 0 0.600 2.600-2.800 0z" fill="#fff"/><path d="M10.200 7.700h-4.500l1.600 1.500c-1.700 2-4 3-6.800 3.300v0.600c3.500 0 6.500-1 8.500-2.600l1.200 1.400z" fill="#fff"/></svg>
<svg class="a" style="left:347px;top:49px;" width="18" height="17" viewBox="0 0 18 17"><path d="M10.500 10.500v-6l4-4h2.500v10z" fill="#fff" stroke="#6a6a90" stroke-width="1"/><path d="M10.800 4.500h3.700v-3.700" fill="#dceae6" stroke="#a0c8c0" stroke-width="0.700"/><g transform="translate(1,8) scale(1.0)"><path d="M0 0h7.500l1.500 1.500v7.500h-9z" fill="#2e2e60"/><rect x="2" y="0.800" width="4.500" height="3" fill="#fff"/><rect x="3.700" y="6" width="1.200" height="2" fill="#fff"/></g><path d="M3.500 6h6.500" stroke="#c80000" stroke-width="1.800"/><path d="M8.500 3l4 3-4 3z" fill="#c80000"/></svg>
<svg class="a" style="left:375px;top:49px;" width="18" height="17" viewBox="0 0 18 17"><path d="M1.500 10.500v-6l4-4h2.500v10z" fill="#fff" stroke="#6a6a90" stroke-width="1"/><path d="M1.800 4.500h3.700v-3.700" fill="#dceae6" stroke="#a0c8c0" stroke-width="0.700"/><g transform="translate(8.5,8) scale(1.0)"><path d="M0 0h7.500l1.500 1.500v7.500h-9z" fill="#2e2e60"/><rect x="2" y="0.800" width="4.500" height="3" fill="#fff"/><rect x="3.700" y="6" width="1.200" height="2" fill="#fff"/></g><path d="M5 6h6" stroke="#c80000" stroke-width="1.800"/><path d="M10 3l4 3-4 3z" fill="#c80000"/></svg>
<svg class="a" style="left:403px;top:49px;" width="18" height="17" viewBox="0 0 18 17"><path d="M1.500 1.500h7l3.500 3.500v10.500h-10.500z" fill="#fff" stroke="#5a5a80" stroke-width="1.100"/><path d="M8.500 1.500v3.500h3.500" fill="#dceae6" stroke="#a0c8c0" stroke-width="0.700"/><path d="M2.500 7h10.500v-1.800l4 4.800-4 4.800v-1.800h-10.500a1.500 1.500 0 0 1-1.500-1.500v-3a1.500 1.500 0 0 1 1.500-1.500z" fill="#1c1c2c"/><path d="M4.500 6.500c0.500-1.500 1.500-2 2.500-2" fill="none" stroke="#1c1c2c" stroke-width="1.300"/><text x="2.300" y="12" font-family="Liberation Sans" font-weight="bold" font-size="5.300" fill="#fff" textLength="10.500" lengthAdjust="spacingAndGlyphs">PDF</text></svg>
<div class="a" style="left:437px;top:46px;width:84px;height:23px;background:#fff;border:1px solid #6e6e6e;box-sizing:border-box;"></div>
<div class="t" style="left:443px;top:51.84px;font-size:12px;line-height:12px;color:#000;letter-spacing:-0.677px;">62%</div>
<svg class="a" style="left:507px;top:55.0px;" width="10" height="6" viewBox="0 0 10 6"><path d="M1 1l4 4 4-4" fill="none" stroke="#333" stroke-width="1.1"/></svg>
<svg class="a" style="left:529px;top:50px;" width="15" height="16" viewBox="0 0 15 16"><rect x="0.600" y="0.600" width="13.800" height="11.300" rx="1.500" fill="#fff" stroke="#5a5a8a" stroke-width="1.100"/><rect x="2.200" y="2.200" width="10.600" height="8" fill="#8cd0de"/><path d="M7.500 2.500v7.500M3 6.200h9" stroke="#22223a" stroke-width="1.100"/><path d="M7.500 2l1.600 2h-3.200zM7.500 10.500l1.600-2h-3.200zM2.300 6.200l2-1.600v3.200zM12.700 6.200l-2-1.600v3.200z" fill="#22223a"/><path d="M3.500 14.500h8" stroke="#6a6a98" stroke-width="1.100"/></svg>
<div class="a" style="left:562px;top:46px;width:23px;height:23px;background:#fff;border:1px solid #9a9a9a;box-sizing:border-box;"></div>
<svg class="a" style="left:565px;top:49px;" width="17" height="17" viewBox="0 0 17 17"><path d="M0.500 0.500h15.500v5.500h-10v10h-5.500z" fill="#8a9cc4" stroke="#aab8d8" stroke-width="0.800"/><path d="M3 2v2.500M5 2v1.500M7 2v2.500M9 2v1.500M11 2v2.500M13 2v1.500M2 7h2.500M2 9h1.500M2 11h2.500M2 13h1.500" stroke="#fff" stroke-width="1"/></svg>
<svg class="a" style="left:592px;top:49px;" width="18" height="17" viewBox="0 0 18 17"><path d="M1.5 0v15M0 1.5h15" stroke="#aaaacc" stroke-width="1.100"/><path d="M4.8 0v15M0 4.8h15" stroke="#aaaacc" stroke-width="1.100"/><path d="M8.1 0v15M0 8.1h15" stroke="#aaaacc" stroke-width="1.100"/><path d="M11.399999999999999 0v15M0 11.399999999999999h15" stroke="#aaaacc" stroke-width="1.100"/><path d="M14.7 0v15M0 14.7h15" stroke="#aaaacc" stroke-width="1.100"/><rect x="4.500" y="6.500" width="13.500" height="10.500" fill="#f4f4f4"/><path d="M4.500 11.500c2.500-4.500 10.500-4.500 13 0-2.500 4.500-10.500 4.500-13 0z" fill="#fff" stroke="#2a2a34" stroke-width="1.300"/><circle cx="11" cy="11.300" r="3" fill="#3c3c48"/><circle cx="10" cy="10.300" r="0.900" fill="#e8e8e8"/></svg>
<div class="a" style="left:618px;top:46px;width:23px;height:23px;background:#fff;border:1px solid #9a9a9a;box-sizing:border-box;"></div>
<svg class="a" style="left:620px;top:48px;" width="19" height="19" viewBox="0 0 19 19"><path d="M6.500 2v15M1 7.500h15" stroke="#000" stroke-width="1.200" stroke-dasharray="1.200,1.300"/><circle cx="6.500" cy="7.500" r="1.300" fill="#fff" stroke="#000" stroke-width="0.800"/><path d="M8 13.500c2-3.500 7-3.500 9 0-2 3.500-7 3.500-9 0z" fill="#e0e0e0" stroke="#9a9a9a" stroke-width="1"/><circle cx="12.500" cy="13.300" r="2.300" fill="#66666e"/><circle cx="11.800" cy="12.600" r="0.700" fill="#ddd"/></svg>
<div class="t" style="left:658.5px;top:51.84px;font-size:12px;line-height:12px;color:#000;letter-spacing:-0.196px;">Przyciągaj do</div>
<svg class="a" style="left:736.5px;top:56px;" width="6" height="3" viewBox="0 0 6 3"><path d="M0 0h6l-3.0 3z" fill="#000"/></svg>
<svg class="a" style="left:763px;top:50px;" width="15" height="15" viewBox="0 0 15 15"><rect x="0.600" y="0.600" width="13.800" height="13.800" fill="#fff" stroke="#4a4a70" stroke-width="1.200"/><rect x="0.600" y="0.600" width="13.800" height="2.200" fill="#6a6a98"/><path d="M2.500 6.500h3v2h3.500v4h-6.500z" fill="#6468b0"/><path d="M8 11v-5l2-2h2v7z" fill="#fff" stroke="#5a5a80" stroke-width="0.900"/><rect x="2.500" y="11.500" width="6.500" height="1" fill="#3a3a70"/></svg>
<svg class="a" style="left:793px;top:48px;" width="13" height="17" viewBox="0 0 13 17"><rect x="0.500" y="2.5" width="3" height="3" fill="#fff" stroke="#8a8ab0" stroke-width="0.700"/><path d="M0.800 3.5l1.500 1.700 3.700-4.700" fill="none" stroke="#2a9a10" stroke-width="1.300"/><path d="M6 3.7h6" stroke="#5a5a80" stroke-width="1.100"/><rect x="0.500" y="7.5" width="3" height="3" fill="#fff" stroke="#8a8ab0" stroke-width="0.700"/><path d="M0.800 8.5l1.500 1.700 3.700-4.700" fill="none" stroke="#2a9a10" stroke-width="1.300"/><path d="M6 8.7h6" stroke="#5a5a80" stroke-width="1.100"/><rect x="0.500" y="12.5" width="3" height="3" fill="#fff" stroke="#8a8ab0" stroke-width="0.700"/><path d="M0.800 13.5l1.500 1.700 3.700-4.700" fill="none" stroke="#2a9a10" stroke-width="1.300"/><path d="M6 13.7h6" stroke="#5a5a80" stroke-width="1.100"/></svg>
<svg class="a" style="left:827px;top:48px;" width="15" height="18" viewBox="0 0 15 18"><rect x="0.700" y="1.200" width="12.600" height="9" fill="#e2e2ea" stroke="#4a4a6a" stroke-width="1.300"/><rect x="1.300" y="1.800" width="11.400" height="2.400" fill="#101018"/><path d="M3.500 13.500c0-2 1.500-2.500 2-2.800l0.700 1.500 1.300-1.700c2 1 3 2.500 2.500 4-0.500 1.500-1.500 2.500-3 2.800 0.500-1 0-2-1-2-1 0-1.500 0.500-1.200 1.500-1-0.700-1.300-2-1.300-3.300z" fill="#f02808"/><path d="M6.300 16.300c0.800 0.700 2 0.500 2.500-0.500l-1 1.500z" fill="#ffd010"/><path d="M7 14.500c1 0 1.700 0.800 1 2.500l-1 0.500c0.500-1 0-1.500-0.500-1.700z" fill="#ffe020"/></svg>
<svg class="a" style="left:851.5px;top:56px;" width="6" height="3" viewBox="0 0 6 3"><path d="M0 0h6l-3.0 3z" fill="#000"/></svg>
<div class="a" style="left:137px;top:76px;width:1px;height:32px;background:#d2d2d2;"></div>
<div class="a" style="left:334px;top:76px;width:1px;height:32px;background:#d2d2d2;"></div>
<div class="a" style="left:435px;top:76px;width:1px;height:32px;background:#d2d2d2;"></div>
<div class="a" style="left:499px;top:76px;width:1px;height:32px;background:#d2d2d2;"></div>
<div class="a" style="left:535px;top:76px;width:1px;height:32px;background:#d2d2d2;"></div>
<div class="a" style="left:646px;top:76px;width:1px;height:32px;background:#d2d2d2;"></div>
<div class="a" style="left:863px;top:76px;width:1px;height:32px;background:#d2d2d2;"></div>
<div class="a" style="left:899px;top:76px;width:1px;height:32px;background:#d2d2d2;"></div>
<div class="a" style="left:935px;top:76px;width:1px;height:32px;background:#d2d2d2;"></div>
<div class="a" style="left:1018px;top:76px;width:1px;height:32px;background:#d2d2d2;"></div>
<div class="a" style="left:1054px;top:76px;width:1px;height:32px;background:#d2d2d2;"></div>
<svg class="a" style="left:6px;top:84px;" width="17" height="17" viewBox="0 0 17 17"><path d="M2.500 2.500h12v12h-12z" fill="none" stroke="#7878a0" stroke-width="1"/><rect x="0.5" y="0.5" width="3.500" height="3.500" fill="#fff" stroke="#7878a0" stroke-width="1"/><rect x="6.5" y="0.5" width="3.500" height="3.500" fill="#fff" stroke="#7878a0" stroke-width="1"/><rect x="12.5" y="0.5" width="3.500" height="3.500" fill="#fff" stroke="#7878a0" stroke-width="1"/><rect x="0.5" y="6.5" width="3.500" height="3.500" fill="#fff" stroke="#7878a0" stroke-width="1"/><rect x="7" y="7" width="3" height="3" fill="#000"/><rect x="12.5" y="6.5" width="3.500" height="3.500" fill="#fff" stroke="#7878a0" stroke-width="1"/><rect x="0.5" y="12.5" width="3.500" height="3.500" fill="#fff" stroke="#7878a0" stroke-width="1"/><rect x="6.5" y="12.5" width="3.500" height="3.500" fill="#fff" stroke="#7878a0" stroke-width="1"/><rect x="12.5" y="12.5" width="3.500" height="3.500" fill="#fff" stroke="#7878a0" stroke-width="1"/></svg>
<div class="t" style="left:33px;top:78.84px;font-size:12px;line-height:12px;color:#000;letter-spacing:-1.172px;">X:</div>
<div class="t" style="left:33px;top:94.84px;font-size:12px;line-height:12px;color:#000;letter-spacing:-0.844px;">Y:</div>
<div class="a" style="left:45px;top:76px;width:86px;height:33px;background:#fff;border:1px solid #6e6e6e;box-sizing:border-box;"></div>
<div class="a" style="left:45px;top:92px;width:86px;height:1px;background:#6e6e6e;"></div>
<div class="t" style="left:48.5px;top:78.84px;font-size:12px;line-height:12px;color:#000;letter-spacing:-0.320px;">108,763 mm</div>
<div class="t" style="left:48.5px;top:94.84px;font-size:12px;line-height:12px;color:#000;letter-spacing:-0.231px;">113,471 mm</div>
<svg class="a" style="left:146px;top:80px;" width="13" height="10" viewBox="0 0 13 10"><path d="M0.700 0.500v9M12.300 0.500v9" stroke="#7a7ac0" stroke-width="1.300"/><path d="M2 5h9" stroke="#2a2a3a" stroke-width="1.300"/><path d="M1.500 5l3-2.500v5zM11.500 5l-3-2.500v5z" fill="#2a2a3a"/></svg>
<svg class="a" style="left:149px;top:95px;" width="9" height="12" viewBox="0 0 9 12"><path d="M0.500 0.700h8M0.500 11.100h8" stroke="#7a7ac0" stroke-width="1.300"/><path d="M4.500 2v8" stroke="#2a2a3a" stroke-width="1.300"/><path d="M4.500 1.300l-2.500 3h5zM4.500 10.500l-2.500-3h5z" fill="#2a2a3a"/></svg>
<div class="a" style="left:161px;top:76px;width:86px;height:33px;background:#fff;border:1px solid #6e6e6e;box-sizing:border-box;"></div>
<div class="a" style="left:161px;top:92px;width:86px;height:1px;background:#6e6e6e;"></div>
<div class="t" style="left:164px;top:78.84px;font-size:12px;line-height:12px;color:#000;letter-spacing:-0.281px;">49,412 mm</div>
<div class="t" style="left:164px;top:94.84px;font-size:12px;line-height:12px;color:#000;letter-spacing:-0.320px;">185,955 mm</div>
<div class="a" style="left:252px;top:76px;width:41px;height:33px;background:#fff;border:1px solid #6e6e6e;box-sizing:border-box;"></div>
<div class="a" style="left:252px;top:92px;width:41px;height:1px;background:#6e6e6e;"></div>
<div class="t" style="left:256px;top:78.84px;font-size:12px;line-height:12px;color:#000;letter-spacing:-0.806px;">100,0</div>
<div class="t" style="left:256px;top:94.84px;font-size:12px;line-height:12px;color:#000;letter-spacing:-0.806px;">100,0</div>
<div class="t" style="left:297px;top:79.84px;font-size:12px;line-height:12px;color:#6a6a78;letter-spacing:-1.672px;">%</div>
<div class="t" style="left:297px;top:95.84px;font-size:12px;line-height:12px;color:#6a6a78;letter-spacing:-1.672px;">%</div>
<svg class="a" style="left:317px;top:87px;" width="9" height="10" viewBox="0 0 9 10"><path d="M2 4.500v-1.500c0-2.500 4-2.500 4.500-0.500" fill="none" stroke="#4a4a8a" stroke-width="1.300"/><rect x="0.500" y="4.300" width="7.500" height="5" fill="#4a4a8a"/><rect x="3.700" y="6" width="1.200" height="1.500" fill="#c8c8e8"/></svg>
<svg class="a" style="left:343px;top:86px;" width="14" height="13" viewBox="0 0 14 13"><path d="M4 6.500a4.300 4.300 0 1 1 2 4" fill="none" stroke="#2a2a3a" stroke-width="1.300"/><path d="M0.500 5.500l3.800 3.500 1.700-4.800z" fill="#2a2a3a"/></svg>
<div class="a" style="left:361px;top:81px;width:48px;height:23px;background:#fff;border:1px solid #6e6e6e;box-sizing:border-box;"></div>
<div class="t" style="left:364px;top:86.84px;font-size:12px;line-height:12px;color:#000;letter-spacing:-0.562px;">0,0</div>
<svg class="a" style="left:414px;top:86px;" width="7" height="7" viewBox="0 0 7 7"><circle cx="3.500" cy="3.500" r="2.300" fill="none" stroke="#5a5a7a" stroke-width="1"/></svg>
<svg class="a" style="left:444px;top:84px;" width="17" height="17" viewBox="0 0 17 17"><path d="M1 4.500h2.500v5h2.500v4.500h-5zM15.500 4.500h-2.500v5h-2.500v4.500h5z" fill="#ececf4" stroke="#4a4a70" stroke-width="1.100"/><path d="M8.300 1v15.500" stroke="#000" stroke-width="1.200" stroke-dasharray="1.200,1.200"/></svg>
<svg class="a" style="left:472px;top:84px;" width="17" height="17" viewBox="0 0 17 17"><path d="M3.500 1.500h9v2.500h-5v2.500h-4zM3.500 15.500h9v-2.500h-5v-2.500h-4z" fill="#ececf4" stroke="#4a4a70" stroke-width="1.100"/><path d="M1 8.500h15.500" stroke="#000" stroke-width="1.200" stroke-dasharray="1.200,1.200"/></svg>
<svg class="a" style="left:509px;top:84px;" width="17" height="17" viewBox="0 0 17 17"><rect x="6.500" y="6.500" width="9" height="9" fill="#dedede" stroke="#cacaca"/><rect x="0.500" y="0.500" width="9" height="9" fill="#e4e4e4" stroke="#cacaca"/><path d="M11.500 4.500l3.500-3.500M12.500 1h2.500v2.500M4.500 11.500l-3.500 3.500M1 12.500v2.500h2.500" fill="none" stroke="#c0c0c0" stroke-width="1"/></svg>
<svg class="a" style="left:546px;top:85px;" width="10" height="15" viewBox="0 0 10 15"><path d="M5 0.800c-2.300 2.300-3.800 5.500-3 9.700h6c0.800-4.200-0.700-7.400-3-9.700z" fill="#fff" stroke="#3a3a5a" stroke-width="1"/><path d="M5 4v4.500" stroke="#6a6a8a" stroke-width="0.900"/><circle cx="5" cy="7.500" r="0.900" fill="#3a3a5a"/><rect x="0.500" y="11.800" width="9" height="2.300" fill="#14142a"/></svg>
<div class="a" style="left:562px;top:81px;width:78px;height:23px;background:#fff;border:1px solid #6e6e6e;box-sizing:border-box;"></div>
<div class="t" style="left:568.5px;top:86.84px;font-size:12px;line-height:12px;color:#000;letter-spacing:-0.253px;">5,0 mm</div>
<svg class="a" style="left:626px;top:90.0px;" width="10" height="6" viewBox="0 0 10 6"><path d="M1 1l4 4 4-4" fill="none" stroke="#333" stroke-width="1.1"/></svg>
<div class="a" style="left:653px;top:81px;width:48px;height:23px;background:#fff;border:1px solid #a8a8b0;box-sizing:border-box;"></div>
<div class="a" style="left:683px;top:82px;width:17px;height:21px;background:#e1e1e1;border:1px solid #adadad;box-sizing:border-box;border-right-width:2px;border-top-width:2px;border-bottom:1px solid #adadad;"></div>
<div class="a" style="left:670px;top:91px;width:11px;height:2.5px;background:#000;"></div>
<svg class="a" style="left:686.5px;top:90.0px;" width="10" height="6" viewBox="0 0 10 6"><path d="M1 1l4 4 4-4" fill="none" stroke="#444" stroke-width="1.1"/></svg>
<div class="a" style="left:706px;top:81px;width:98px;height:23px;background:#fff;border:1px solid #a8a8b0;box-sizing:border-box;"></div>
<div class="a" style="left:786px;top:82px;width:17px;height:21px;background:#e1e1e1;border:1px solid #adadad;box-sizing:border-box;border-right-width:2px;border-top-width:2px;border-bottom:1px solid #adadad;"></div>
<div class="a" style="left:709px;top:93px;width:75px;height:1px;background:#000;"></div>
<svg class="a" style="left:789.5px;top:90.0px;" width="10" height="6" viewBox="0 0 10 6"><path d="M1 1l4 4 4-4" fill="none" stroke="#444" stroke-width="1.1"/></svg>
<div class="a" style="left:809px;top:81px;width:48px;height:23px;background:#fff;border:1px solid #a8a8b0;box-sizing:border-box;"></div>
<div class="a" style="left:839px;top:82px;width:17px;height:21px;background:#e1e1e1;border:1px solid #adadad;box-sizing:border-box;border-right-width:2px;border-top-width:2px;border-bottom:1px solid #adadad;"></div>
<div class="a" style="left:812px;top:91px;width:10px;height:2.5px;background:#000;"></div>
<svg class="a" style="left:842.5px;top:90.0px;" width="10" height="6" viewBox="0 0 10 6"><path d="M1 1l4 4 4-4" fill="none" stroke="#444" stroke-width="1.1"/></svg>
<svg class="a" style="left:877px;top:84px;" width="10" height="16" viewBox="0 0 10 16"><path d="M3 3c7-1.500 7 11.500 0 10" fill="none" stroke="#4a4a6a" stroke-width="1.200"/><rect x="1" y="1" width="3.500" height="3.500" fill="#fff" stroke="#3a3a5a" stroke-width="1.100"/><rect x="1" y="11" width="3.500" height="3.500" fill="#fff" stroke="#3a3a5a" stroke-width="1.100"/><path d="M2.800 5.500l2.500 2.500h-1.500v2.500h-2v-2.500h-1.500z" fill="#f02010"/></svg>
<svg class="a" style="left:910px;top:84px;" width="18" height="18" viewBox="0 0 18 18"><path d="M0 1.500h14M0 4.500h4M0 7.500h4M0 10.500h4M0 13.500h14" stroke="#cfcfcf" stroke-width="1"/><rect x="5.500" y="3" width="8.500" height="9" fill="#d8d8d8" stroke="#cccccc"/><path d="M17 12.500v4.500h-4.500z" fill="#b0b0b0"/></svg>
<svg class="a" style="left:944px;top:84px;" width="16" height="16" viewBox="0 0 16 16"><path d="M1 5c3-5 6-3 8 1s4 5 6 1" fill="none" stroke="#26264a" stroke-width="1.400"/><path d="M1 11c3-5 6-3 8 1s4 5 5.500 2" fill="none" stroke="#26264a" stroke-width="1.400"/><path d="M15.800 8l-3.800-1.500 1.500 3.800z" fill="#26264a"/></svg>
<div class="a" style="left:962px;top:81px;width:50px;height:23px;background:#fff;border:1px solid #6e6e6e;box-sizing:border-box;"></div>
<div class="t" style="left:965.5px;top:86.84px;font-size:12px;line-height:12px;color:#000;letter-spacing:-0.930px;">50</div>
<div class="a" style="left:994px;top:84px;width:15px;height:17px;background:#f0f0f0;"></div>
<svg class="a" style="left:997px;top:86px;" width="11" height="13" viewBox="0 0 11 13"><path d="M4.500 0.500v12" stroke="#000" stroke-width="1.300"/><rect x="0.700" y="5" width="8.600" height="3" fill="#fff" stroke="#000" stroke-width="1.200"/></svg>
<svg class="a" style="left:1028px;top:84px;" width="16" height="16" viewBox="0 0 16 16"><rect x="3" y="3" width="2" height="2" fill="#c4c4c4"/><rect x="7" y="3" width="2" height="2" fill="#c4c4c4"/><rect x="11" y="3" width="2" height="2" fill="#c4c4c4"/><rect x="3" y="7" width="2" height="2" fill="#c4c4c4"/><rect x="11" y="7" width="2" height="2" fill="#c4c4c4"/><rect x="3" y="11" width="2" height="2" fill="#c4c4c4"/><rect x="7" y="11" width="2" height="2" fill="#c4c4c4"/><rect x="11" y="11" width="2" height="2" fill="#c4c4c4"/><path d="M0 0l2.500 2.500M16 0l-2.500 2.500M0 16l2.500-2.500M16 16l-2.500-2.500M8 0v2M8 14v2M0 8h2M14 8h2" stroke="#d4d4d4" stroke-width="0.900"/></svg>
<svg class="a" style="left:1070px;top:84px;" width="18" height="18" viewBox="0 0 18 18"><circle cx="9" cy="8.700" r="7.700" fill="none" stroke="#c8c8c8" stroke-width="1"/><path d="M9 3.500v10.500M3.700 8.700h10.600" stroke="#c4c4c4" stroke-width="1.600"/></svg>
<div class="a" style="left:30px;top:113px;width:107px;height:19px;background:#d9d9d9;"></div>
<div class="t" style="left:33px;top:117.34px;font-size:12px;line-height:12px;color:#000;letter-spacing:-0.048px;">Ekran powitalny</div>
<div class="a" style="left:137px;top:113px;width:86px;height:19px;background:#cce4fc;"></div>
<div class="t" style="left:141px;top:117.34px;font-size:12px;line-height:12px;color:#000;letter-spacing:-0.438px;">Beznazwy-1</div>
<div class="a" style="left:224px;top:113px;width:19px;height:19px;background:#d9d9d9;"></div>
<svg class="a" style="left:228px;top:117px;" width="11" height="10" viewBox="0 0 11 10"><path d="M5.500 0v10M0 5h11" stroke="#b4b4b4" stroke-width="1.800"/></svg>
<!-- sec_left -->
<div class="a" style="left:4px;top:116px;width:23px;height:23px;background:#fff;border:1px solid #9a9a9a;box-sizing:border-box;"></div>
<svg class="a" style="left:10px;top:119px;" width="12" height="16" viewBox="0 0 12 16"><path d="M1.200 0.800v11.500l2.800-2.500 2 4.500 2-0.900-2-4.300h3.800z" fill="#f0f0f8" stroke="#55556e" stroke-width="1.100"/></svg>
<svg class="a" style="left:20px;top:132px;" width="6" height="6" viewBox="0 0 6 6"><path d="M5 0v5h-5z" fill="#000"/></svg>
<svg class="a" style="left:8px;top:146px;" width="14" height="18" viewBox="0 0 14 18"><path d="M5 0.500c-2.500 5-2.500 11 0 16" fill="none" stroke="#8c8cac" stroke-width="1.200"/><rect x="1.300" y="5" width="3.400" height="3.400" fill="#fff" stroke="#3a3a56" stroke-width="1.100"/><path d="M5.500 8.500l7.500 3-4 4.500z" fill="#26263c"/></svg>
<svg class="a" style="left:20px;top:160px;" width="6" height="6" viewBox="0 0 6 6"><path d="M5 0v5h-5z" fill="#000"/></svg>
<div class="a" style="left:4px;top:173px;width:22px;height:1px;background:#dadada;"></div>
<svg class="a" style="left:7px;top:183px;" width="16" height="16" viewBox="0 0 16 16"><path d="M1 4.500h11v9.500M4.500 1v10h10" fill="none" stroke="#46465f" stroke-width="1.800"/><path d="M4.500 11l9.500-9.500" stroke="#46465f" stroke-width="1.300"/></svg>
<svg class="a" style="left:20px;top:196px;" width="6" height="6" viewBox="0 0 6 6"><path d="M5 0v5h-5z" fill="#000"/></svg>
<svg class="a" style="left:6px;top:211px;" width="18" height="18" viewBox="0 0 18 18"><circle cx="7.200" cy="7.200" r="5.800" fill="#fff" stroke="#46465f" stroke-width="1.300"/><path d="M2.600 8a4.700 4.700 0 0 0 9.200 0z" fill="#c8c8dc"/><path d="M11.500 11.500l5 5" stroke="#2e2e42" stroke-width="2.200"/></svg>
<svg class="a" style="left:20px;top:224px;" width="6" height="6" viewBox="0 0 6 6"><path d="M5 0v5h-5z" fill="#000"/></svg>
<div class="a" style="left:4px;top:237px;width:22px;height:1px;background:#dadada;"></div>
<svg class="a" style="left:8px;top:248px;" width="14" height="14" viewBox="0 0 14 14"><path d="M1.500 1.500l11 11" stroke="#3a3a56" stroke-width="1" stroke-dasharray="2,0"/><rect x="0.800" y="0.800" width="1.600" height="1.600" fill="#3a3a56"/><rect x="11.300" y="11.300" width="1.600" height="1.600" fill="#3a3a56"/><rect x="5.200" y="5.200" width="3.600" height="3.600" fill="#fff" stroke="#3a3a56" stroke-width="1.100"/></svg>
<svg class="a" style="left:20px;top:260px;" width="6" height="6" viewBox="0 0 6 6"><path d="M5 0v5h-5z" fill="#000"/></svg>
<svg class="a" style="left:7px;top:278px;" width="16" height="11" viewBox="0 0 16 11"><path d="M1.500 4.500c0-3 4-4.500 6-1.500 1.500 2.300 2.500 5 5 4.500 1.500-0.300 1.500-2.200 0-2.700" fill="none" stroke="#46465f" stroke-width="1.500"/><path d="M8 4.500c2-3.500 7.500-2 6.800 2-0.500 3.500-5 4-6.800 1.500 2.500 1 4.500 0 4.500-1.800 0-1.800-2.500-2.500-4.500-1.700z" fill="#46465f"/><circle cx="2" cy="4.800" r="1.100" fill="#46465f"/></svg>
<svg class="a" style="left:9px;top:306px;" width="13" height="13" viewBox="0 0 13 13"><rect x="0.600" y="0.600" width="11.300" height="11.300" fill="#fff" stroke="#4e4e6c" stroke-width="1.200"/><rect x="1.300" y="6.500" width="10" height="4.800" fill="#dcdcec"/></svg>
<svg class="a" style="left:20px;top:316px;" width="6" height="6" viewBox="0 0 6 6"><path d="M5 0v5h-5z" fill="#000"/></svg>
<svg class="a" style="left:8px;top:333px;" width="14" height="14" viewBox="0 0 14 14"><circle cx="7" cy="7" r="5.900" fill="#fff" stroke="#4e4e6c" stroke-width="1.200"/><path d="M1.700 7.500a5.300 5.300 0 0 0 10.600 0z" fill="#dcdcec"/></svg>
<svg class="a" style="left:20px;top:344px;" width="6" height="6" viewBox="0 0 6 6"><path d="M5 0v5h-5z" fill="#000"/></svg>
<svg class="a" style="left:7px;top:361px;" width="16" height="14" viewBox="0 0 16 14"><path d="M1 7l3.500-5.800h7l3.500 5.800-3.500 5.800h-7z" fill="#fff" stroke="#4e4e6c" stroke-width="1.200"/><path d="M1.800 7.500h12.400l-3 4.700h-6.400z" fill="#dcdcec"/></svg>
<svg class="a" style="left:20px;top:372px;" width="6" height="6" viewBox="0 0 6 6"><path d="M5 0v5h-5z" fill="#000"/></svg>
<div class="a" style="left:4px;top:385px;width:22px;height:1px;background:#dadada;"></div>
<svg class="a" style="left:7px;top:395px;" width="16" height="17" viewBox="0 0 16 17"><path d="M1 15l5-13.500h3.500l5 13.500h-3.300l-1-3h-5l-1 3zM6.200 9.300h3.200l-1.600-5z" fill="#ececf6" stroke="#7474a0" stroke-width="1.200" stroke-linejoin="round"/></svg>
<svg class="a" style="left:20px;top:408px;" width="6" height="6" viewBox="0 0 6 6"><path d="M5 0v5h-5z" fill="#000"/></svg>
<div class="a" style="left:4px;top:421px;width:22px;height:1px;background:#dadada;"></div>
<svg class="a" style="left:7px;top:431px;" width="16" height="15" viewBox="0 0 16 15"><path d="M3 11.500l9.500-8" stroke="#26263c" stroke-width="1.400"/><path d="M1 8.500l4 5.500M11 1l4 5.500" stroke="#26263c" stroke-width="1.400"/><path d="M2.500 12l3.800-1-2-2.500zM13 3l-3.800 1 2 2.500z" fill="#26263c"/></svg>
<svg class="a" style="left:20px;top:444px;" width="6" height="6" viewBox="0 0 6 6"><path d="M5 0v5h-5z" fill="#000"/></svg>
<svg class="a" style="left:9px;top:458px;" width="12" height="18" viewBox="0 0 12 18"><path d="M3 3.500l6 11" stroke="#4e4e6c" stroke-width="1.200"/><rect x="0.800" y="1.300" width="4.400" height="4.400" fill="#f48400" stroke="#66668e" stroke-width="1"/><rect x="6" y="12.300" width="4.400" height="4.400" fill="#f48400" stroke="#66668e" stroke-width="1"/></svg>
<svg class="a" style="left:20px;top:472px;" width="6" height="6" viewBox="0 0 6 6"><path d="M5 0v5h-5z" fill="#000"/></svg>
<div class="a" style="left:4px;top:485px;width:22px;height:1px;background:#dadada;"></div>
<svg class="a" style="left:7px;top:497px;" width="15" height="15" viewBox="0 0 15 15"><rect x="3" y="3.500" width="10.500" height="10" fill="#8c8cae"/><rect x="2.500" y="3" width="10.500" height="10" fill="#7878a0" opacity="0.500"/><rect x="1.300" y="1.300" width="9" height="9" fill="#fff" stroke="#4e4e6c" stroke-width="1.200"/><rect x="2" y="6.500" width="7.700" height="3.200" fill="#e0e0ec"/></svg>
<svg class="a" style="left:20px;top:508px;" width="6" height="6" viewBox="0 0 6 6"><path d="M5 0v5h-5z" fill="#000"/></svg>
<svg class="a" style="left:6px;top:522px;" width="18" height="18" viewBox="0 0 18 18"><defs><linearGradient id="tg" x1="0" y1="0" x2="0" y2="1"><stop offset="0" stop-color="#8a96c0"/><stop offset="1" stop-color="#2c3866"/></linearGradient></defs><path d="M8 2.500l6 4.500c-1.500 3-5 3.500-7 1.500s-1-4.500 1-6z" fill="#fff" stroke="#46466a" stroke-width="1.100"/><path d="M7 6.500l6 1c-1.500 2-4.500 2-6-1z" fill="#3a4678"/><path d="M7.500 9l-5 4M1 10.500l3.500 4" stroke="#6a6a92" stroke-width="1.100"/><path d="M13 9.500l3.800 8h-7.300z" fill="url(#tg)"/></svg>
<div class="a" style="left:4px;top:549px;width:22px;height:1px;background:#dadada;"></div>
<svg class="a" style="left:7px;top:558px;" width="17" height="18" viewBox="0 0 17 18"><rect x="0" y="9" width="8.200" height="8.200" fill="#f08000"/><rect x="0.0" y="9.0" width="2.700" height="2.700" fill="#f08000"/><rect x="2.7" y="9.0" width="2.700" height="2.700" fill="#f8a848"/><rect x="5.4" y="9.0" width="2.700" height="2.700" fill="#f08000"/><rect x="0.0" y="11.7" width="2.700" height="2.700" fill="#f8a848"/><rect x="2.7" y="11.7" width="2.700" height="2.700" fill="#f08000"/><rect x="5.4" y="11.7" width="2.700" height="2.700" fill="#f8a848"/><rect x="0.0" y="14.4" width="2.700" height="2.700" fill="#f08000"/><rect x="2.7" y="14.4" width="2.700" height="2.700" fill="#f8a848"/><rect x="5.4" y="14.4" width="2.700" height="2.700" fill="#f08000"/><path d="M5 13.500l7.500-8" stroke="#9a9ab0" stroke-width="2.400"/><path d="M5 13.500l7.500-8" stroke="#4a4a62" stroke-width="1"/><path d="M10 4.500l3.500 3.500M11.500 6l3-3.500a1.800 1.800 0 0 0-2.500-2.500l-3 3z" fill="#22222e" stroke="#22222e" stroke-width="1.600"/></svg>
<svg class="a" style="left:20px;top:572px;" width="6" height="6" viewBox="0 0 6 6"><path d="M5 0v5h-5z" fill="#000"/></svg>
<svg class="a" style="left:8px;top:586px;" width="16" height="18" viewBox="0 0 16 18"><defs><linearGradient id="fg" x1="0" y1="0" x2="0" y2="1"><stop offset="0" stop-color="#fce0a0"/><stop offset="1" stop-color="#f4a418"/></linearGradient></defs><g transform="translate(1,1.500) scale(0.820)"><path d="M5.500 2.500l5.500 5.500-4.500 4.500-5.500-5.500z" fill="#fff" stroke="#46466a" stroke-width="1.100"/><path d="M2 7.500h8l-3.500 4z" fill="#f08000"/><path d="M4 4c0-3 3.500-3 3.500-0.500v2" fill="none" stroke="#46466a" stroke-width="1.100"/></g><path d="M10 9.500l3.500 7.500h-7z" fill="url(#fg)"/></svg>
<svg class="a" style="left:20px;top:600px;" width="6" height="6" viewBox="0 0 6 6"><path d="M5 0v5h-5z" fill="#000"/></svg>
<svg class="a" style="left:6px;top:613px;" width="18" height="19" viewBox="0 0 18 19"><path d="M5.500 2l5 5-4.500 4.500-5-5z" fill="#fff" stroke="#4e4e6c" stroke-width="1.100"/><path d="M2 7h7.500l-3.500 3.700z" fill="#f08000"/><path d="M4 3.500c0-2.800 3.300-2.800 3.300-0.500v1.500" fill="none" stroke="#46466a" stroke-width="1.100"/><path d="M10 6.500v6h2.500" fill="none" stroke="#f08000" stroke-width="1.400"/><rect x="7.500" y="12.500" width="7" height="5.500" fill="#fff" stroke="#3a3a62" stroke-width="1.100"/><rect x="10" y="10.500" width="7" height="5.500" fill="none" stroke="#3a3a62" stroke-width="1.100"/><rect x="10.600" y="13" width="3.400" height="2.500" fill="#f08000"/></svg>
<div class="a" style="left:4px;top:641px;width:22px;height:1px;background:#dadada;"></div>
<svg class="a" style="left:6px;top:657px;" width="18" height="18" viewBox="0 0 18 18"><circle cx="9" cy="8.700" r="8" fill="none" stroke="#cacaca" stroke-width="1"/><path d="M9 3.500v10.500M3.700 8.700h10.600" stroke="#c6c6c6" stroke-width="1.600"/></svg>
<!-- sec_right -->
<div class="a" style="left:1860px;top:152px;width:17px;height:855px;background:#fff;"></div>
<div class="a" style="left:1860px;top:152px;width:17px;height:17px;background:#f0f0f0;"></div>
<svg class="a" style="left:1860px;top:152px;" width="17" height="17" viewBox="0 0 17 17"><path d="M4.800 10.500l3.500-3.500 3.500 3.500" fill="none" stroke="#404040" stroke-width="1.900"/></svg>
<div class="a" style="left:1860px;top:358px;width:16px;height:447px;background:#cdcdcd;"></div>
<div class="a" style="left:1860px;top:990px;width:17px;height:17px;background:#f0f0f0;"></div>
<svg class="a" style="left:1860px;top:990px;" width="17" height="17" viewBox="0 0 17 17"><path d="M4.800 6.500l3.500 3.500 3.500-3.500" fill="none" stroke="#404040" stroke-width="1.900"/></svg>
<div class="a" style="left:1877px;top:113px;width:5px;height:934px;background:#fff;"></div>
<div class="a" style="left:1879px;top:118px;width:1px;height:924px;background:#d4d4d4;"></div>
<div class="a" style="left:1882px;top:113px;width:20px;height:931px;background:#ebebeb;"></div>
<svg class="a" style="left:1885px;top:116px;" width="12" height="12" viewBox="0 0 12 12"><path d="M2.5 2.5l7 7M9.5 2.5l-7 7" stroke="#a0a0a0" stroke-width="1.1" fill="none"/></svg>
<div class="a" style="left:1882px;top:132px;width:19px;height:148px;background:#b4b4b4;"></div>
<svg class="a" style="left:1883px;top:135px;" width="18" height="17" viewBox="0 0 18 17"><path d="M2.5 3.5v12M2.5 3.5h4M5 8.5h5M9.5 8.5v6h3" fill="none" stroke="#fff" stroke-width="1" stroke-dasharray="1,1"/>
<circle cx="2.5" cy="3" r="1.5" fill="#fff" stroke="#4a4a70" stroke-width="0.8"/>
<rect x="6.5" y="1.5" width="4" height="4" fill="#e8e8f8" stroke="#4a4a70" stroke-width="0.9"/>
<rect x="12.5" y="4.500" width="3" height="3" fill="#e8e8f8" stroke="#4a4a70" stroke-width="0.9"/>
<rect x="11.5" y="9.5" width="4" height="3" fill="#e8e8f8" stroke="#4a4a70" stroke-width="0.9"/>
<circle cx="13.500" cy="15" r="1.3" fill="#fff" stroke="#4a4a70" stroke-width="0.8"/></svg>
<div class="t" style="left:1891.5px;top:207.5px;font-size:12px;line-height:12px;color:#000;transform:translate(-50%,-50%) rotate(90deg);letter-spacing:-0.062px">Menedżer obiektów</div>
<svg class="a" style="left:1883px;top:297px;" width="17" height="17" viewBox="0 0 17 17"><circle cx="8.5" cy="8.5" r="7.5" fill="none" stroke="#c8c8c8" stroke-width="1"/><path d="M8.5 4v9M4 8.5h9" stroke="#c8c8c8" stroke-width="1.6"/></svg>
<div class="a" style="left:1902px;top:113px;width:18px;height:931px;background:#f4f4f4;"></div>
<svg class="a" style="left:1904px;top:116px;" width="14" height="4" viewBox="0 0 14 4"><path d="M1 2.5h2M5.500 2.5h2M10 2.5h2" stroke="#b0b0b0" stroke-width="1.2"/></svg>
<svg class="a" style="left:1906px;top:122px;" width="9" height="12" viewBox="0 0 9 12"><path d="M1.5 1l6 5-6 5z" fill="#000"/></svg>
<svg class="a" style="left:1904px;top:136px;" width="14" height="14" viewBox="0 0 14 14"><path d="M9.500 1.200a2 2 0 0 1 3.300 3.300l-1.600 1.300 0.800 0.800-1.200 1.200-4-4 1.200-1.200 0.800 0.800z" fill="#c4c4c4"/><path d="M7.200 5.300l1.600 1.600-5 5-2.300 1.300-0.500-0.500 1.300-2.200z" fill="#cfcfcf"/></svg>
<svg class="a" style="left:1905px;top:154px;" width="12" height="8" viewBox="0 0 12 8"><path d="M2 6l4-4 4 4" fill="none" stroke="#d0d0d0" stroke-width="1.2"/></svg>
<svg class="a" style="left:1902px;top:166px;" width="18" height="839" viewBox="0 0 18 839"><rect x="0" y="0" width="18" height="840" fill="#4a4a4a"/><rect x="1" y="1" width="17" height="16" fill="#fff"/><path d="M2 2l15 14M17 2l-15 14" stroke="#000" stroke-width="1"/><rect x="1" y="18" width="17" height="16" fill="#1a1a18"/><rect x="1" y="35" width="17" height="16" fill="#333331"/><rect x="1" y="52" width="17" height="16" fill="#4d4d4c"/><rect x="1" y="69" width="17" height="16" fill="#666665"/><rect x="1" y="86" width="17" height="16" fill="#808080"/><rect x="1" y="103" width="17" height="16" fill="#999999"/><rect x="1" y="120" width="17" height="16" fill="#b3b3b3"/><rect x="1" y="137" width="17" height="16" fill="#c9c9c9"/><rect x="1" y="154" width="17" height="16" fill="#dddedd"/><rect x="1" y="171" width="17" height="16" fill="#ececec"/><rect x="1" y="188" width="17" height="16" fill="#ffffff"/><rect x="1" y="205" width="17" height="16" fill="#3a2a96"/><rect x="1" y="222" width="17" height="16" fill="#00a0d6"/><rect x="1" y="239" width="17" height="16" fill="#00a65a"/><rect x="1" y="256" width="17" height="16" fill="#fbe116"/><rect x="1" y="273" width="17" height="16" fill="#de2a1c"/><rect x="1" y="290" width="17" height="16" fill="#e2007e"/><rect x="1" y="307" width="17" height="16" fill="#ae4a8c"/><rect x="1" y="324" width="17" height="16" fill="#f07d00"/><rect x="1" y="341" width="17" height="16" fill="#ffb7bf"/><rect x="1" y="358" width="17" height="16" fill="#7d6f68"/><rect x="1" y="375" width="17" height="16" fill="#dcd8f4"/><rect x="1" y="392" width="17" height="16" fill="#b2a6e2"/><rect x="1" y="409" width="17" height="16" fill="#7e96d2"/><rect x="1" y="426" width="17" height="16" fill="#8b74c8"/><rect x="1" y="443" width="17" height="16" fill="#9890ba"/><rect x="1" y="460" width="17" height="16" fill="#55648c"/><rect x="1" y="477" width="17" height="16" fill="#595470"/><rect x="1" y="494" width="17" height="16" fill="#73869e"/><rect x="1" y="511" width="17" height="16" fill="#0090c8"/><rect x="1" y="528" width="17" height="16" fill="#acdcf4"/><rect x="1" y="545" width="17" height="16" fill="#bccdda"/><rect x="1" y="562" width="17" height="16" fill="#96a6ae"/><rect x="1" y="579" width="17" height="16" fill="#6c7a82"/><rect x="1" y="596" width="17" height="16" fill="#404a4e"/><rect x="1" y="613" width="17" height="16" fill="#546f6e"/><rect x="1" y="630" width="17" height="16" fill="#4c8a7a"/><rect x="1" y="647" width="17" height="16" fill="#789a98"/><rect x="1" y="664" width="17" height="16" fill="#62b2a0"/><rect x="1" y="681" width="17" height="16" fill="#66aa7a"/><rect x="1" y="698" width="17" height="16" fill="#80d8dc"/><rect x="1" y="715" width="17" height="16" fill="#62b0b8"/><rect x="1" y="732" width="17" height="16" fill="#b8ccbc"/><rect x="1" y="749" width="17" height="16" fill="#dcfadc"/><rect x="1" y="766" width="17" height="16" fill="#b4f0c0"/><rect x="1" y="783" width="17" height="16" fill="#96a499"/><rect x="1" y="800" width="17" height="16" fill="#949e7c"/><rect x="1" y="817" width="17" height="16" fill="#c0c87a"/><rect x="1" y="834" width="17" height="6" fill="#c4d4a0"/></svg>
<svg class="a" style="left:1904px;top:1008px;" width="13" height="10" viewBox="0 0 13 10"><path d="M2 3l4.500 4.500 4.500-4.500" fill="none" stroke="#c8c8c8" stroke-width="1.3"/></svg>
<svg class="a" style="left:1904px;top:1024px;" width="13" height="10" viewBox="0 0 13 10"><path d="M2 1.500l3.500 3.500-3.500 3.500M7 1.500l3.500 3.500-3.500 3.500" fill="none" stroke="#c0c0c0" stroke-width="1.1"/></svg>
<!-- sec_bottom -->
<div class="a" style="left:49px;top:1008px;width:915px;height:17px;background:#f4f4f4;"></div>
<div class="a" style="left:48px;top:1007px;width:916px;height:1px;background:#8c8c8c;"></div>
<div class="a" style="left:48px;top:1006px;width:1px;height:18px;background:#8c8c8c;"></div>
<div class="a" style="left:963px;top:1007px;width:1px;height:17px;background:#6a6a6a;"></div>
<div class="a" style="left:964px;top:1008px;width:913px;height:16px;background:#fff;"></div>
<div class="a" style="left:965px;top:1008px;width:17px;height:15px;background:#f0f0f0;"></div>
<svg class="a" style="left:965px;top:1008px;" width="17" height="15" viewBox="0 0 17 15"><path d="M9.300 4l-3.500 3.500 3.500 3.500" fill="none" stroke="#404040" stroke-width="1.900"/></svg>
<div class="a" style="left:982px;top:1008px;width:859px;height:15px;background:#cdcdcd;"></div>
<div class="a" style="left:1842px;top:1008px;width:17px;height:15px;background:#f0f0f0;"></div>
<svg class="a" style="left:1842px;top:1008px;" width="17" height="15" viewBox="0 0 17 15"><path d="M6.700 4l3.500 3.500-3.500 3.500" fill="none" stroke="#404040" stroke-width="1.900"/></svg>
<svg class="a" style="left:1860px;top:1007px;" width="17" height="17" viewBox="0 0 17 17"><circle cx="7" cy="7" r="5.300" fill="#fff" stroke="#3a3a5a" stroke-width="1.2"/><circle cx="7" cy="7" r="2" fill="none" stroke="#3a3a5a" stroke-width="1"/><path d="M7 1.700v2.500M7 9.800v2.500M1.700 7h2.500M9.800 7h2.500" stroke="#3a3a5a" stroke-width="0.9"/><path d="M11 11l4.500 4.500" stroke="#3a3a5a" stroke-width="2.200"/></svg>
<svg class="a" style="left:957px;top:1010px;" width="4" height="12" viewBox="0 0 4 12"><path d="M1 1.500l1.500-1M1 5.500l1.500-1M1 9.500l1.500-1" stroke="#b0b0b0" stroke-width="1.200"/></svg>
<div class="a" style="left:30px;top:1025px;width:1847px;height:1px;background:#dedede;"></div>
<div class="a" style="left:0px;top:1044px;width:1920px;height:1px;background:#d8d8d8;"></div>
<div class="a" style="left:30px;top:1026px;width:1847px;height:18px;background:#f4f4f4;"></div>
<div class="a" style="left:29px;top:1025px;width:1px;height:20px;background:#e2e2e2;"></div>
<div class="a" style="left:0px;top:1045px;width:1920px;height:32px;background:#f4f4f4;"></div>
<div class="a" style="left:0px;top:1077px;width:1920px;height:1px;background:#fff;"></div>
<div class="a" style="left:0px;top:1078px;width:1920px;height:2px;background:#000;"></div>
<svg class="a" style="left:52px;top:1009px;" width="10" height="12" viewBox="0 0 10 12"><path d="M0.600 0.600h5.400l2.900 2.900v7.900h-8.300z" fill="#fff" stroke="#000" stroke-width="1.100"/><path d="M6 0.600v2.900h2.900" fill="none" stroke="#000" stroke-width="0.900"/><path d="M4.700 4.700v4.600M2.400 7h4.600" stroke="#000" stroke-width="1.200"/></svg>
<svg class="a" style="left:69px;top:1010px;" width="10" height="11" viewBox="0 0 10 11"><path d="M1.500 0.500v10" stroke="#808080" stroke-width="1.300"/><path d="M8.500 0.500v10l-5.500-5z" fill="#808080"/></svg>
<svg class="a" style="left:88px;top:1010px;" width="8" height="11" viewBox="0 0 8 11"><path d="M6.500 0.500v10l-5.500-5z" fill="#808080"/></svg>
<div class="t" style="left:115px;top:1010.84px;font-size:12px;line-height:12px;color:#000;letter-spacing:-0.603px;">1 z 1</div>
<svg class="a" style="left:160px;top:1010px;" width="8" height="11" viewBox="0 0 8 11"><path d="M1.500 0.500v10l5.500-5z" fill="#808080"/></svg>
<svg class="a" style="left:175px;top:1010px;" width="10" height="11" viewBox="0 0 10 11"><path d="M8.500 0.500v10" stroke="#808080" stroke-width="1.300"/><path d="M1.500 0.500v10l5.500-5z" fill="#808080"/></svg>
<svg class="a" style="left:192px;top:1009px;" width="10" height="12" viewBox="0 0 10 12"><path d="M0.600 0.600h5.400l2.900 2.900v7.900h-8.300z" fill="#fff" stroke="#000" stroke-width="1.100"/><path d="M6 0.600v2.900h2.900" fill="none" stroke="#000" stroke-width="0.900"/><path d="M4.700 4.700v4.600M2.400 7h4.600" stroke="#000" stroke-width="1.200"/></svg>
<svg class="a" style="left:205px;top:1007px;" width="78" height="18" viewBox="0 0 78 18"><path d="M1.500 17V0.500h66.500l7.500 7.500V17" fill="#fff" stroke="#9a9a9a" stroke-width="1"/></svg>
<div class="t" style="left:221px;top:1008.84px;font-size:12px;line-height:12px;color:#000;letter-spacing:-0.297px;">Strona 1</div>
<svg class="a" style="left:33px;top:1028px;" width="4" height="16" viewBox="0 0 4 16"><path d="M1 2.500h2M1 6.500h2M1 10.500h2M1 14.500h2" stroke="#c0c0c0" stroke-width="1.200"/></svg>
<svg class="a" style="left:41px;top:1028px;" width="8" height="12" viewBox="0 0 8 12"><path d="M1 1l5.500 5-5.500 5z" fill="#000"/></svg>
<svg class="a" style="left:53px;top:1027px;" width="14" height="16" viewBox="0 0 14 16"><path d="M9.500 1.400a2 2 0 0 1 3.200 3.200l-1.600 1.400 0.800 0.800-1.300 1.300-4-4 1.300-1.300 0.800 0.800z" fill="#1c1c28"/><path d="M7 5.600l1.800 1.800-5 5.600-2.600 1.500-0.400-0.400 1.500-2.600z" fill="#78a0a0" stroke="#4a6a78" stroke-width="0.600"/></svg>
<svg class="a" style="left:70px;top:1029px;" width="8" height="12" viewBox="0 0 8 12"><path d="M6 1.500l-4.500 4.500 4.500 4.500" fill="none" stroke="#c4c4c4" stroke-width="1.300"/></svg>
<svg class="a" style="left:83px;top:1026px;" width="35" height="18" viewBox="0 0 35 18"><rect x="0.500" y="0.500" width="34" height="17" fill="#fff" stroke="#555" stroke-width="1"/><path d="M1.500 1.500l15 15M16.500 1.500l-15 15" stroke="#000" stroke-width="1"/><rect x="17" y="1" width="17" height="16" fill="#00a651"/><path d="M17.500 0.500v17" stroke="#555" stroke-width="1"/></svg>
<svg class="a" style="left:1838px;top:1029px;" width="12" height="12" viewBox="0 0 12 12"><path d="M3.500 1l5 5-5 5" fill="none" stroke="#d0d0d0" stroke-width="1.300"/></svg>
<svg class="a" style="left:1856px;top:1030px;" width="12" height="10" viewBox="0 0 12 10"><path d="M2 1.500l3.500 3.500-3.500 3.500M7 1.500l3.500 3.500-3.500 3.500" fill="none" stroke="#c0c0c0" stroke-width="1.100"/></svg>
<div class="t" style="left:5px;top:1055.84px;font-size:12px;line-height:12px;color:#000;letter-spacing:-0.420px;">( 385,030; -32,847 )</div>
<svg class="a" style="left:111px;top:1054px;" width="15" height="15" viewBox="0 0 15 15"><rect x="0.500" y="0.500" width="14" height="14" fill="#fff" stroke="#000" stroke-width="1"/><path d="M5 3l5.500 4.500-5.500 4.500z" fill="#000"/></svg>
<div class="t" style="left:158px;top:1055.84px;font-size:12px;line-height:12px;color:#000;letter-spacing:-0.347px;">Krzywa na Warstwa 1</div>
<svg class="a" style="left:1465px;top:1053px;" width="18" height="17" viewBox="0 0 18 17"><rect x="1.500" y="1.500" width="15" height="11" rx="1" fill="#e6e6f0" stroke="#5a5a86" stroke-width="1.200"/><rect x="3.500" y="3.500" width="11" height="7" fill="#c84840"/><rect x="3.500" y="3.500" width="4" height="7" fill="#4a9a5a"/><rect x="11" y="3.500" width="3.500" height="7" fill="#4a68b8"/><rect x="6" y="4.500" width="6" height="5" fill="#fff" stroke="#333" stroke-width="0.800"/><circle cx="9" cy="7" r="1.300" fill="none" stroke="#222" stroke-width="0.900"/><path d="M5 15.500h8M9 13v2.500" stroke="#5a5a86" stroke-width="1.200"/></svg>
<svg class="a" style="left:1493px;top:1052px;" width="18" height="18" viewBox="0 0 18 18"><path d="M8 2.500l6.500 6.500-6 6.500-6.500-6.500z" fill="#fff" stroke="#3a3a4a" stroke-width="1.100"/><path d="M3 9.500h11l-5.500 5.800z" fill="#f08010"/><path d="M6 5c0-3 4-3 4 0v3" fill="none" stroke="#3a3a4a" stroke-width="1.100"/><path d="M14.500 9c1.800 0.500 2.300 2 2.300 4.500" fill="none" stroke="#f08010" stroke-width="1.500"/></svg>
<svg class="a" style="left:1516px;top:1053px;" width="18" height="17" viewBox="0 0 18 17"><rect x="0.500" y="0.500" width="17" height="16" fill="#fff" stroke="#555" stroke-width="1"/><path d="M1 1l16 15M17 1l-16 15" stroke="#000" stroke-width="1.100"/></svg>
<div class="t" style="left:1537px;top:1055.84px;font-size:12px;line-height:12px;color:#000;letter-spacing:-0.422px;">Brak</div>
<div class="a" style="left:1698px;top:1050px;width:1px;height:23px;background:#dcdcdc;"></div>
<svg class="a" style="left:1706px;top:1053px;" width="12" height="17" viewBox="0 0 12 17"><path d="M6 1c-2.500 2.500-4 6-3 10h6c1-4-0.500-7.500-3-10z" fill="#fff" stroke="#2a2a48" stroke-width="1.100"/><path d="M6 4.500v4" stroke="#2a2a48" stroke-width="0.900"/><circle cx="6" cy="8.500" r="0.900" fill="#2a2a48"/><path d="M2.500 12.500h7M1.500 15.500h9" stroke="#2a2a48" stroke-width="1.400"/></svg>
<div class="a" style="left:1725px;top:1053px;width:18px;height:17px;background:#00a651;border:1px solid #8a8a8a;box-sizing:border-box;"></div>
<div class="t" style="left:1746px;top:1055.84px;font-size:12px;line-height:12px;color:#000;letter-spacing:-0.398px;">C:100 M:0 Y:100 K:0  5,000 mm</div>
<!-- sec_dialog -->
<div class="a" style="left:1192px;top:285px;width:448px;height:447px;background:#fff;border:1px solid #a0a0a0;box-sizing:border-box;"></div>
<div class="a" style="left:1197px;top:311px;width:438px;height:416px;background:#f4f4f4;"></div>
<div class="t" style="left:1202px;top:291.84px;font-size:12px;line-height:12px;color:#000;letter-spacing:0.125px;">Pióro konturu</div>
<svg class="a" style="left:1615px;top:290px;" width="15" height="14" viewBox="0 0 15 14"><path d="M1.500 1l12 12M13.500 1l-12 12" stroke="#222" stroke-width="1.400" fill="none"/></svg>
<div class="t" style="left:1209px;top:331.84px;font-size:12px;line-height:12px;color:#000;letter-spacing:-0.060px;">Kolor:</div>
<div class="a" style="left:1267px;top:324px;width:61px;height:26px;background:#fff;border:1px solid #adadad;box-sizing:border-box;"></div>
<div class="a" style="left:1269px;top:326px;width:43px;height:23px;background:#00a651;border:1px dotted #000;box-sizing:border-box;"></div>
<div class="a" style="left:1313px;top:326px;width:14px;height:22px;background:#e1e1e1;"></div>
<div class="a" style="left:1326px;top:325px;width:2px;height:25px;background:#adadad;"></div>
<div class="a" style="left:1313px;top:348px;width:14px;height:2px;background:#adadad;"></div>
<svg class="a" style="left:1314.5px;top:334px;" width="10" height="6" viewBox="0 0 10 6"><path d="M1 1l4 4 4-4" fill="none" stroke="#404040" stroke-width="1.1"/></svg>
<div class="t" style="left:1209px;top:357.84px;font-size:12px;line-height:12px;color:#000;letter-spacing:-0.436px;">Szerokość:</div>
<div class="a" style="left:1209px;top:375px;width:88px;height:23px;background:#fff;border:1px solid #7a7a7a;box-sizing:border-box;"></div>
<div class="t" style="left:1215.5px;top:379.84px;font-size:12px;line-height:12px;color:#000;letter-spacing:-0.086px;">5,0 mm</div>
<svg class="a" style="left:1282.5px;top:384px;" width="10" height="6" viewBox="0 0 10 6"><path d="M1 1l4 4 4-4" fill="none" stroke="#404040" stroke-width="1.1"/></svg>
<div class="a" style="left:1307px;top:375px;width:107px;height:23px;background:#e1e1e1;border:1px solid #adadad;box-sizing:border-box;"></div>
<div class="t" style="left:1311px;top:379.84px;font-size:12px;line-height:12px;color:#000;letter-spacing:0.333px;">milimetry</div>
<svg class="a" style="left:1400px;top:384px;" width="10" height="6" viewBox="0 0 10 6"><path d="M1 1l4 4 4-4" fill="none" stroke="#404040" stroke-width="1.1"/></svg>
<div class="t" style="left:1209px;top:417.84px;font-size:12px;line-height:12px;color:#000;letter-spacing:-0.269px;">Styl:</div>
<div class="a" style="left:1209px;top:435px;width:205px;height:26px;background:#fff;border:1px solid #adadad;box-sizing:border-box;"></div>
<div class="a" style="left:1211px;top:448px;width:186px;height:1px;background:#000;"></div>
<div class="a" style="left:1398px;top:437px;width:15px;height:23px;background:#e1e1e1;border:1px solid #c8c8c8;box-sizing:border-box;border-right:2px solid #adadad;border-bottom:2px solid #adadad;"></div>
<svg class="a" style="left:1400px;top:445px;" width="10" height="6" viewBox="0 0 10 6"><path d="M1 1l4 4 4-4" fill="none" stroke="#404040" stroke-width="1.1"/></svg>
<div class="a" style="left:1308px;top:471px;width:105px;height:24px;background:#e1e1e1;border:1px solid #adadad;box-sizing:border-box;"></div>
<div class="t" style="left:1329.5px;top:476.84px;font-size:12px;line-height:12px;color:#000;letter-spacing:-0.156px;">Edytuj styl...</div>
<div class="t" style="left:1209px;top:516.84px;font-size:12px;line-height:12px;color:#000;letter-spacing:-0.086px;">Narożniki:</div>
<div class="a" style="left:1308px;top:511px;width:23px;height:24px;background:#cce4f7;border:1px solid #0a5ca8;box-sizing:border-box;"></div>
<svg class="a" style="left:1308px;top:511px;" width="23" height="24" viewBox="0 0 23 24"><path d="M6.500 6.500h13v6h-7v7h-6z" fill="#4a4860"/></svg>
<div class="a" style="left:1336px;top:511px;width:23px;height:24px;background:#e1e1e1;border:1px solid #adadad;box-sizing:border-box;"></div>
<svg class="a" style="left:1336px;top:511px;" width="23" height="24" viewBox="0 0 23 24"><path d="M6.500 19.500v-8q0-5 5-5h8v6h-7v7z" fill="#4a4860"/></svg>
<div class="a" style="left:1364px;top:511px;width:23px;height:24px;background:#e1e1e1;border:1px solid #adadad;box-sizing:border-box;"></div>
<svg class="a" style="left:1364px;top:511px;" width="23" height="24" viewBox="0 0 23 24"><path d="M6.500 19.500v-6l7-7h6v6h-7v7z" fill="#4a4860"/></svg>
<div class="t" style="left:1209px;top:543.84px;font-size:12px;line-height:12px;color:#000;letter-spacing:-0.182px;">Limit złącza</div>
<div class="a" style="left:1307px;top:540px;width:81px;height:26px;background:#fff;border:1px solid #adadad;box-sizing:border-box;"></div>
<div class="t" style="left:1312.5px;top:543.84px;font-size:12px;line-height:12px;color:#000;letter-spacing:-0.496px;">5,0</div>
<div class="a" style="left:1369px;top:542px;width:17px;height:11px;background:#ebebeb;border:1px solid #bebebe;box-sizing:border-box;"></div>
<div class="a" style="left:1369px;top:554px;width:17px;height:10px;background:#ebebeb;border:1px solid #bebebe;box-sizing:border-box;"></div>
<svg class="a" style="left:1375px;top:546px;" width="5" height="3" viewBox="0 0 5 3"><path d="M0 3h5l-2.500-3z" fill="#000"/></svg>
<svg class="a" style="left:1375px;top:557px;" width="5" height="3" viewBox="0 0 5 3"><path d="M0 0h5l-2.500 3z" fill="#000"/></svg>
<div class="t" style="left:1391px;top:540.69px;font-size:11px;line-height:11px;color:#000;">o</div>
<div class="t" style="left:1209px;top:586.84px;font-size:12px;line-height:12px;color:#000;letter-spacing:-0.240px;">Zakończenia:</div>
<div class="a" style="left:1308px;top:580px;width:23px;height:24px;background:#e1e1e1;border:1px solid #adadad;box-sizing:border-box;"></div>
<svg class="a" style="left:1308px;top:580px;" width="23" height="24" viewBox="0 0 23 24"><path d="M5.500 9.500h14v6h-14z" fill="#4a4860"/><rect x="4.500" y="10.500" width="2.500" height="4" fill="#e8e8f0" stroke="#4a4860" stroke-width="0.800"/></svg>
<div class="a" style="left:1336px;top:580px;width:23px;height:24px;background:#cce4f7;border:1px solid #0a5ca8;box-sizing:border-box;"></div>
<svg class="a" style="left:1336px;top:580px;" width="23" height="24" viewBox="0 0 23 24"><path d="M7.500 9.500h12v6h-12a3 3 0 0 1 0-6z" fill="#4a4860"/><rect x="7" y="11.500" width="2" height="2" fill="#c0c0d0"/></svg>
<div class="a" style="left:1364px;top:580px;width:23px;height:24px;background:#e1e1e1;border:1px solid #adadad;box-sizing:border-box;"></div>
<svg class="a" style="left:1364px;top:580px;" width="23" height="24" viewBox="0 0 23 24"><path d="M4.500 9.500h15v6h-15z" fill="#4a4860"/><rect x="7" y="11.500" width="2" height="2" fill="#e0e0ea"/></svg>
<div class="t" style="left:1209px;top:616.84px;font-size:12px;line-height:12px;color:#a8a8a8;letter-spacing:-0.255px;">Położenie:</div>
<div class="a" style="left:1308px;top:610px;width:23px;height:24px;background:#cccccc;border:1px solid #c0c0c0;box-sizing:border-box;"></div>
<svg class="a" style="left:1308px;top:610px;" width="23" height="24" viewBox="0 0 23 24"><path d="M4.500 4.500h15v16h-5v-11h-10z" fill="#74728a"/><circle cx="15" cy="9" r="1.200" fill="#bbb"/></svg>
<div class="a" style="left:1336px;top:610px;width:23px;height:24px;background:#cce4f7;border:1px solid #0a5ca8;box-sizing:border-box;"></div>
<svg class="a" style="left:1336px;top:610px;" width="23" height="24" viewBox="0 0 23 24"><path d="M4.500 4.500h15v16h-5v-11h-10z" fill="#74728a"/><path d="M4.500 7h12.500v13.500" fill="none" stroke="#aab4d4" stroke-width="1.200"/><circle cx="17" cy="7" r="1.300" fill="#d0d8ee"/></svg>
<div class="a" style="left:1364px;top:610px;width:23px;height:24px;background:#cccccc;border:1px solid #c0c0c0;box-sizing:border-box;"></div>
<svg class="a" style="left:1364px;top:610px;" width="23" height="24" viewBox="0 0 23 24"><path d="M4.500 6.500h13v14h-5v-9h-8z" fill="#74728a"/><circle cx="18" cy="6" r="1.600" fill="#aaa" stroke="#999" stroke-width="0.500"/></svg>
<div class="a" style="left:1209px;top:655px;width:13px;height:13px;background:#fff;border:1px solid #333;box-sizing:border-box;"></div>
<div class="t" style="left:1225.5px;top:655.84px;font-size:12px;line-height:12px;color:#000;letter-spacing:0.046px;">Nadrukowanie konturu</div>
<div class="a" style="left:1425px;top:326px;width:198px;height:123px;border:1px solid #dcdcdc;box-sizing:border-box;"></div>
<div class="a" style="left:1431px;top:320px;width:43px;height:12px;background:#f4f4f4;"></div>
<div class="t" style="left:1434px;top:320.84px;font-size:12px;line-height:12px;color:#000;letter-spacing:-0.293px;">Strzałki</div>
<div class="a" style="left:1460px;top:343px;width:61px;height:38px;background:#fff;border:1px solid #adadad;box-sizing:border-box;"></div>
<div class="a" style="left:1505px;top:345px;width:15px;height:35px;background:#e1e1e1;border:1px solid #c0c0c0;box-sizing:border-box;"></div>
<div class="a" style="left:1483px;top:361px;width:21px;height:2px;background:#000;"></div>
<svg class="a" style="left:1507.5px;top:359px;" width="10" height="6" viewBox="0 0 10 6"><path d="M1 1l4 4 4-4" fill="none" stroke="#404040" stroke-width="1.1"/></svg>
<div class="a" style="left:1524px;top:343px;width:61px;height:38px;background:#fff;border:1px solid #adadad;box-sizing:border-box;"></div>
<div class="a" style="left:1569px;top:345px;width:15px;height:35px;background:#e1e1e1;border:1px solid #c0c0c0;box-sizing:border-box;"></div>
<div class="a" style="left:1526px;top:361px;width:21px;height:2px;background:#000;"></div>
<svg class="a" style="left:1571.5px;top:359px;" width="10" height="6" viewBox="0 0 10 6"><path d="M1 1l4 4 4-4" fill="none" stroke="#404040" stroke-width="1.1"/></svg>
<div class="a" style="left:1433px;top:390px;width:88px;height:26px;background:#e1e1e1;border:1px solid #adadad;box-sizing:border-box;"></div>
<div class="t" style="left:1439.5px;top:396.84px;font-size:12px;line-height:12px;color:#000;letter-spacing:-0.172px;"><u>O</u>pcje</div>
<svg class="a" style="left:1508px;top:401px;" width="5" height="3" viewBox="0 0 5 3"><path d="M0 0h5l-2.5 3z" fill="#000"/></svg>
<div class="a" style="left:1524px;top:390px;width:88px;height:26px;background:#e1e1e1;border:1px solid #adadad;box-sizing:border-box;"></div>
<div class="t" style="left:1530.5px;top:396.84px;font-size:12px;line-height:12px;color:#000;letter-spacing:-0.172px;">Opcj<u>e</u></div>
<svg class="a" style="left:1599px;top:401px;" width="5" height="3" viewBox="0 0 5 3"><path d="M0 0h5l-2.5 3z" fill="#000"/></svg>
<div class="a" style="left:1435px;top:427px;width:13px;height:13px;background:#fff;border:1px solid #333;box-sizing:border-box;"></div>
<div class="t" style="left:1451px;top:427.84px;font-size:12px;line-height:12px;color:#000;letter-spacing:0.018px;">Wspólne atrybuty</div>
<div class="a" style="left:1425px;top:459px;width:198px;height:161px;border:1px solid #dcdcdc;box-sizing:border-box;"></div>
<div class="a" style="left:1431px;top:453px;width:55px;height:12px;background:#f4f4f4;"></div>
<div class="t" style="left:1434.5px;top:453.84px;font-size:12px;line-height:12px;color:#000;letter-spacing:-0.203px;">Kaligrafia</div>
<div class="t" style="left:1437.5px;top:471.84px;font-size:12px;line-height:12px;color:#000;letter-spacing:-0.335px;">Nacisk:</div>
<div class="t" style="left:1517.5px;top:471.84px;font-size:12px;line-height:12px;color:#000;letter-spacing:-0.120px;">Kształt końcówki:</div>
<div class="a" style="left:1437px;top:489px;width:70px;height:26px;background:#fff;border:1px solid #adadad;box-sizing:border-box;"></div>
<div class="t" style="left:1442.5px;top:492.84px;font-size:12px;line-height:12px;color:#000;letter-spacing:-0.610px;">100</div>
<div class="a" style="left:1488px;top:491px;width:17px;height:11px;background:#ebebeb;border:1px solid #bebebe;box-sizing:border-box;"></div>
<div class="a" style="left:1488px;top:503px;width:17px;height:10px;background:#ebebeb;border:1px solid #bebebe;box-sizing:border-box;"></div>
<svg class="a" style="left:1494px;top:495px;" width="5" height="3" viewBox="0 0 5 3"><path d="M0 3h5l-2.500-3z" fill="#000"/></svg>
<svg class="a" style="left:1494px;top:506px;" width="5" height="3" viewBox="0 0 5 3"><path d="M0 0h5l-2.500 3z" fill="#000"/></svg>
<div class="t" style="left:1509.5px;top:496.84px;font-size:12px;line-height:12px;color:#000;letter-spacing:-0.672px;">%</div>
<div class="t" style="left:1437.5px;top:531.84px;font-size:12px;line-height:12px;color:#000;letter-spacing:-0.715px;">Kąt:</div>
<div class="a" style="left:1437px;top:549px;width:70px;height:26px;background:#fff;border:1px solid #adadad;box-sizing:border-box;"></div>
<div class="t" style="left:1442px;top:552.84px;font-size:12px;line-height:12px;color:#000;letter-spacing:-0.396px;">0,0</div>
<div class="a" style="left:1488px;top:551px;width:17px;height:11px;background:#ebebeb;border:1px solid #bebebe;box-sizing:border-box;"></div>
<div class="a" style="left:1488px;top:563px;width:17px;height:10px;background:#ebebeb;border:1px solid #bebebe;box-sizing:border-box;"></div>
<svg class="a" style="left:1494px;top:555px;" width="5" height="3" viewBox="0 0 5 3"><path d="M0 3h5l-2.500-3z" fill="#000"/></svg>
<svg class="a" style="left:1494px;top:566px;" width="5" height="3" viewBox="0 0 5 3"><path d="M0 0h5l-2.500 3z" fill="#000"/></svg>
<div class="t" style="left:1509.5px;top:544.69px;font-size:11px;line-height:11px;color:#000;">o</div>
<div class="a" style="left:1528px;top:489px;width:81px;height:87px;background:#fff;border:1px solid #fff;box-sizing:border-box;border-top:2px solid #696969;border-left:2px solid #696969;"></div>
<div class="a" style="left:1542px;top:506px;width:54px;height:54px;background:#00a651;"></div>
<div class="a" style="left:1525px;top:584px;width:86px;height:24px;background:#e1e1e1;border:1px solid #adadad;box-sizing:border-box;"></div>
<div class="t" style="left:1540.5px;top:589.84px;font-size:12px;line-height:12px;color:#000;letter-spacing:-0.002px;">Domyślnie</div>
<div class="a" style="left:1425px;top:631px;width:13px;height:13px;background:#fff;border:1px solid #333;box-sizing:border-box;"></div>
<div class="t" style="left:1441px;top:631.84px;font-size:12px;line-height:12px;color:#000;letter-spacing:-0.036px;">Za wypełnieniem</div>
<div class="a" style="left:1425px;top:655px;width:13px;height:13px;background:#fff;border:1px solid #333;box-sizing:border-box;"></div>
<div class="t" style="left:1441px;top:655.84px;font-size:12px;line-height:12px;color:#000;letter-spacing:-0.150px;">Skaluj z obiektem</div>
<div class="a" style="left:1211px;top:680px;width:410px;height:1px;background:#a0a0a0;"></div>
<div class="a" style="left:1352px;top:693px;width:86px;height:24px;background:#e1e1e1;border:2px solid #0078d7;box-sizing:border-box;"></div>
<div class="t" style="left:1387px;top:698.84px;font-size:12px;line-height:12px;color:#000;letter-spacing:-0.672px;">OK</div>
<div class="a" style="left:1445px;top:693px;width:86px;height:24px;background:#e1e1e1;border:1px solid #adadad;box-sizing:border-box;"></div>
<div class="t" style="left:1470px;top:698.84px;font-size:12px;line-height:12px;color:#000;letter-spacing:0.273px;">Anuluj</div>
<div class="a" style="left:1538px;top:693px;width:86px;height:24px;background:#e1e1e1;border:1px solid #adadad;box-sizing:border-box;"></div>
<div class="t" style="left:1562px;top:698.84px;font-size:12px;line-height:12px;color:#000;letter-spacing:0.128px;">Pomoc</div>
</body></html>
